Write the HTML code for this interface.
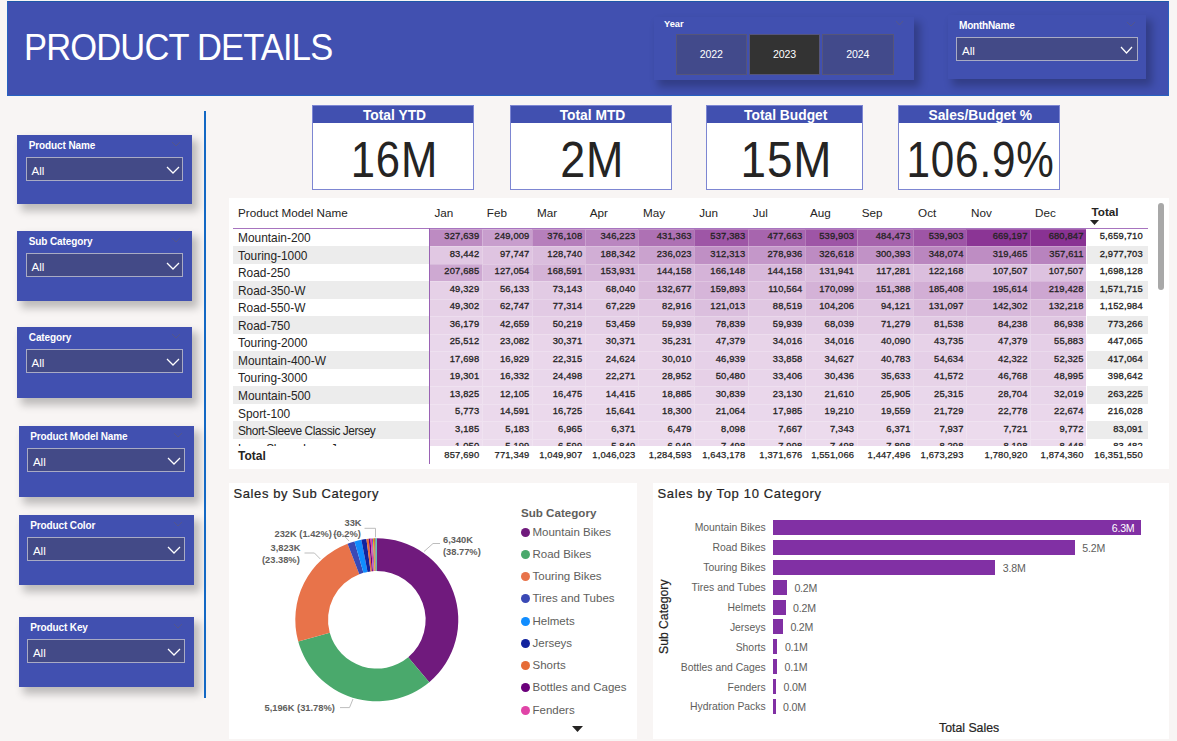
<!DOCTYPE html>
<html><head><meta charset="utf-8"><title>Product Details</title>
<style>
*{margin:0;padding:0;box-sizing:border-box}
html,body{width:1177px;height:741px;overflow:hidden;background:#f8f5f4;font-family:"Liberation Sans", sans-serif;}
.a{position:absolute}
.t{position:absolute;white-space:nowrap;line-height:1}
.slicer{position:absolute;background:#4150b0;box-shadow:5px 6px 8px 1px rgba(0,0,0,0.24);}
.sl-title{position:absolute;left:11px;top:5px;color:#fff;font-weight:bold;font-size:10px;white-space:nowrap;line-height:12px}
.dd{position:absolute;background:#434a87;border:1.7px solid #a9abc4;}
.dd .v{position:absolute;left:4.5px;top:6px;color:#fff;font-size:11.6px;line-height:14px}
.chev{position:absolute}
.card{position:absolute;background:#fff;border:1px solid #7d86d2;}
.card .h{position:absolute;left:0;top:0;right:0;height:17px;background:#4150b0;color:#fff;font-weight:bold;font-size:13.8px;text-align:center;line-height:17px;padding-left:3px;padding-top:0.6px;height:16.6px;white-space:nowrap}
.card .n{position:absolute;left:0;right:0;top:33.5px;text-align:center;color:#252423;font-size:49.3px;line-height:40px;white-space:nowrap}
.card .n span{display:inline-block;transform:scaleX(0.84);transform-origin:center;letter-spacing:1px;margin-left:1px}
</style></head><body>

<div class="a" style="left:7px;top:1px;width:1162px;height:95px;background:#4150b0;border:1.3px solid #2862c0;border-top:1.5px solid #1f58a8"></div>
<div class="t" style="left:23.5px;top:29px;color:#fff;font-size:37.5px;letter-spacing:-0.9px;line-height:37px;transform:scaleX(0.92);transform-origin:0 0">PRODUCT DETAILS</div>
<div class="slicer" style="left:654px;top:16.5px;width:260px;height:63.5px"></div>
<div class="t" style="left:664px;top:20px;color:#fff;font-weight:bold;font-size:9.3px;line-height:9px">Year</div>
<svg class="chev" style="left:895px;top:20px" width="9" height="6" viewBox="0 0 9 6"><polyline points="1,1 4.5,5 8,1" fill="none" stroke="rgba(90,90,130,0.8)" stroke-width="1"/></svg>
<div class="a" style="left:676px;top:33.5px;width:70.5px;height:41px;background:#424a8b;border:1px solid #55557a"></div>
<div class="t" style="left:676px;width:70.5px;top:48.3px;text-align:center;color:#fff;font-size:10.6px;letter-spacing:-0.1px;line-height:12px">2022</div>
<div class="a" style="left:749px;top:33.5px;width:71px;height:41px;background:#333333;border:1px solid #55557a"></div>
<div class="t" style="left:749px;width:71px;top:48.3px;text-align:center;color:#fff;font-size:10.6px;letter-spacing:-0.1px;line-height:12px">2023</div>
<div class="a" style="left:822px;top:33.5px;width:71.5px;height:41px;background:#424a8b;border:1px solid #55557a"></div>
<div class="t" style="left:822px;width:71.5px;top:48.3px;text-align:center;color:#fff;font-size:10.6px;letter-spacing:-0.1px;line-height:12px">2024</div>
<div class="slicer" style="left:948px;top:15px;width:198px;height:64px"></div>
<div class="t" style="left:959px;top:20.8px;color:#fff;font-weight:bold;font-size:10.1px;line-height:10px;letter-spacing:-0.25px">MonthName</div>
<svg class="chev" style="left:1126px;top:20.5px" width="10" height="6" viewBox="0 0 10 6"><polyline points="1,1 5.0,5 9,1" fill="none" stroke="rgba(85,85,135,0.9)" stroke-width="1"/></svg>
<div class="dd" style="left:956px;top:37px;width:182px;height:24px"><div class="v" style="top:5.5px;left:5px">All</div></div>
<svg class="chev" style="left:1120.3px;top:46px" width="13" height="8" viewBox="0 0 13 8"><polyline points="1,1 6.5,7 12,1" fill="none" stroke="#fff" stroke-width="1.25"/></svg>
<div class="slicer" style="left:17.3px;top:134.8px;width:175.1px;height:69.7px"></div>
<div class="t" style="left:28.8px;top:140.0px;color:#fff;font-weight:bold;font-size:10px;line-height:11px;letter-spacing:-0.12px">Product Name</div>
<svg class="chev" style="left:171.3px;top:140.8px" width="10" height="6" viewBox="0 0 10 6"><polyline points="1,1 5.0,5 9,1" fill="none" stroke="rgba(85,85,135,0.9)" stroke-width="1"/></svg>
<div class="dd" style="left:26.0px;top:156.8px;width:157.3px;height:24px"><div class="v">All</div></div>
<svg class="chev" style="left:165.60000000000002px;top:165.8px" width="14" height="8" viewBox="0 0 14 8"><polyline points="1,1 7.0,7 13,1" fill="none" stroke="#fff" stroke-width="1.25"/></svg>
<div class="slicer" style="left:17.3px;top:231px;width:175.1px;height:69.7px"></div>
<div class="t" style="left:28.8px;top:236.2px;color:#fff;font-weight:bold;font-size:10px;line-height:11px;letter-spacing:-0.12px">Sub Category</div>
<svg class="chev" style="left:171.3px;top:237px" width="10" height="6" viewBox="0 0 10 6"><polyline points="1,1 5.0,5 9,1" fill="none" stroke="rgba(85,85,135,0.9)" stroke-width="1"/></svg>
<div class="dd" style="left:26.0px;top:253px;width:157.3px;height:24px"><div class="v">All</div></div>
<svg class="chev" style="left:165.60000000000002px;top:262px" width="14" height="8" viewBox="0 0 14 8"><polyline points="1,1 7.0,7 13,1" fill="none" stroke="#fff" stroke-width="1.25"/></svg>
<div class="slicer" style="left:17.3px;top:327.2px;width:175.1px;height:71.3px"></div>
<div class="t" style="left:28.8px;top:332.4px;color:#fff;font-weight:bold;font-size:10px;line-height:11px;letter-spacing:-0.12px">Category</div>
<svg class="chev" style="left:171.3px;top:333.2px" width="10" height="6" viewBox="0 0 10 6"><polyline points="1,1 5.0,5 9,1" fill="none" stroke="rgba(85,85,135,0.9)" stroke-width="1"/></svg>
<div class="dd" style="left:26.0px;top:349.2px;width:157.3px;height:24px"><div class="v">All</div></div>
<svg class="chev" style="left:165.60000000000002px;top:358.2px" width="14" height="8" viewBox="0 0 14 8"><polyline points="1,1 7.0,7 13,1" fill="none" stroke="#fff" stroke-width="1.25"/></svg>
<div class="slicer" style="left:18.7px;top:426.1px;width:175.10000000000002px;height:70.7px"></div>
<div class="t" style="left:30.2px;top:431.3px;color:#fff;font-weight:bold;font-size:10px;line-height:11px;letter-spacing:-0.12px">Product Model Name</div>
<svg class="chev" style="left:172.7px;top:432.1px" width="10" height="6" viewBox="0 0 10 6"><polyline points="1,1 5.0,5 9,1" fill="none" stroke="rgba(85,85,135,0.9)" stroke-width="1"/></svg>
<div class="dd" style="left:27.4px;top:448.1px;width:157.3px;height:24px"><div class="v">All</div></div>
<svg class="chev" style="left:167.0px;top:457.1px" width="14" height="8" viewBox="0 0 14 8"><polyline points="1,1 7.0,7 13,1" fill="none" stroke="#fff" stroke-width="1.25"/></svg>
<div class="slicer" style="left:18.7px;top:514.7px;width:175.10000000000002px;height:70.7px"></div>
<div class="t" style="left:30.2px;top:519.9000000000001px;color:#fff;font-weight:bold;font-size:10px;line-height:11px;letter-spacing:-0.12px">Product Color</div>
<svg class="chev" style="left:172.7px;top:520.7px" width="10" height="6" viewBox="0 0 10 6"><polyline points="1,1 5.0,5 9,1" fill="none" stroke="rgba(85,85,135,0.9)" stroke-width="1"/></svg>
<div class="dd" style="left:27.4px;top:536.7px;width:157.3px;height:24px"><div class="v">All</div></div>
<svg class="chev" style="left:167.0px;top:545.7px" width="14" height="8" viewBox="0 0 14 8"><polyline points="1,1 7.0,7 13,1" fill="none" stroke="#fff" stroke-width="1.25"/></svg>
<div class="slicer" style="left:18.7px;top:617.2px;width:175.10000000000002px;height:69.5px"></div>
<div class="t" style="left:30.2px;top:622.4000000000001px;color:#fff;font-weight:bold;font-size:10px;line-height:11px;letter-spacing:-0.12px">Product Key</div>
<svg class="chev" style="left:172.7px;top:623.2px" width="10" height="6" viewBox="0 0 10 6"><polyline points="1,1 5.0,5 9,1" fill="none" stroke="rgba(85,85,135,0.9)" stroke-width="1"/></svg>
<div class="dd" style="left:27.4px;top:639.2px;width:157.3px;height:24px"><div class="v">All</div></div>
<svg class="chev" style="left:167.0px;top:648.2px" width="14" height="8" viewBox="0 0 14 8"><polyline points="1,1 7.0,7 13,1" fill="none" stroke="#fff" stroke-width="1.25"/></svg>
<div class="a" style="left:203.5px;top:110.8px;width:2px;height:587.7px;background:#1368c4"></div>
<div class="card" style="left:312px;top:105px;width:162px;height:85px"><div class="h">Total YTD</div><div class="n" style="margin-left:2px"><span style="transform:scaleX(0.885)">16M</span></div></div>
<div class="card" style="left:510px;top:105px;width:162px;height:85px"><div class="h">Total MTD</div><div class="n" style="margin-left:1.5px"><span style="transform:scaleX(0.91)">2M</span></div></div>
<div class="card" style="left:706px;top:105px;width:156.5px;height:85px"><div class="h">Total Budget</div><div class="n" style="margin-left:4px"><span style="transform:scaleX(0.93)">15M</span></div></div>
<div class="card" style="left:897.5px;top:105px;width:162.5px;height:85px"><div class="h">Sales/Budget %</div><div class="n" style="margin-left:-5.5px"><span style="transform:scaleX(0.856)">106.9%</span></div></div>
<div class="a" style="left:229px;top:198px;width:940px;height:270.5px;background:#fff"></div>
<div class="t" style="left:238px;top:207px;color:#252423;font-size:11.7px;line-height:12px">Product Model Name</div>
<div class="t" style="left:434.5px;top:207px;color:#252423;font-size:11.7px;line-height:12px">Jan</div>
<div class="t" style="left:486.8px;top:207px;color:#252423;font-size:11.7px;line-height:12px">Feb</div>
<div class="t" style="left:537.0px;top:207px;color:#252423;font-size:11.7px;line-height:12px">Mar</div>
<div class="t" style="left:589.8px;top:207px;color:#252423;font-size:11.7px;line-height:12px">Apr</div>
<div class="t" style="left:642.9px;top:207px;color:#252423;font-size:11.7px;line-height:12px">May</div>
<div class="t" style="left:699.2px;top:207px;color:#252423;font-size:11.7px;line-height:12px">Jun</div>
<div class="t" style="left:752.8px;top:207px;color:#252423;font-size:11.7px;line-height:12px">Jul</div>
<div class="t" style="left:809.9px;top:207px;color:#252423;font-size:11.7px;line-height:12px">Aug</div>
<div class="t" style="left:861.7px;top:207px;color:#252423;font-size:11.7px;line-height:12px">Sep</div>
<div class="t" style="left:918.1px;top:207px;color:#252423;font-size:11.7px;line-height:12px">Oct</div>
<div class="t" style="left:971.1px;top:207px;color:#252423;font-size:11.7px;line-height:12px">Nov</div>
<div class="t" style="left:1035.1px;top:207px;color:#252423;font-size:11.7px;line-height:12px">Dec</div>
<div class="t" style="left:1091.5px;top:206.3px;color:#252423;font-size:11.7px;font-weight:bold;line-height:12px">Total</div>
<svg class="a" style="left:1090px;top:220px" width="9" height="6"><polygon points="0,0 9,0 4.5,5" fill="#252423"/></svg>
<div class="a" style="left:229px;top:228.5px;width:940px;height:217.5px;overflow:hidden">
<div class="t" style="left:9px;top:3.8px;color:#252423;font-size:11.9px;line-height:12px;letter-spacing:normal">Mountain-200</div>
<div class="a" style="left:200.4px;top:0.0px;width:52.30000000000001px;height:17.52px;background:#bd8bc2;border-left:1px solid rgba(255,255,255,0.22);border-top:1px solid rgba(255,255,255,0.22)"></div>
<div class="t" style="left:201px;width:49.30000000000001px;top:2.5px;text-align:right;color:#252423;font-size:9.4px;letter-spacing:0.15px;-webkit-text-stroke:0.3px #252423;line-height:10px">327,639</div>
<div class="a" style="left:252.70000000000002px;top:0.0px;width:50.19999999999999px;height:17.52px;background:#c89ecd;border-left:1px solid rgba(255,255,255,0.22);border-top:1px solid rgba(255,255,255,0.22)"></div>
<div class="t" style="left:253.3px;width:47.19999999999999px;top:2.5px;text-align:right;color:#252423;font-size:9.4px;letter-spacing:0.15px;-webkit-text-stroke:0.3px #252423;line-height:10px">249,009</div>
<div class="a" style="left:302.9px;top:0.0px;width:52.799999999999955px;height:17.52px;background:#b67fbc;border-left:1px solid rgba(255,255,255,0.22);border-top:1px solid rgba(255,255,255,0.22)"></div>
<div class="t" style="left:303.5px;width:49.799999999999955px;top:2.5px;text-align:right;color:#252423;font-size:9.4px;letter-spacing:0.15px;-webkit-text-stroke:0.3px #252423;line-height:10px">376,108</div>
<div class="a" style="left:355.69999999999993px;top:0.0px;width:53.10000000000002px;height:17.52px;background:#ba86c0;border-left:1px solid rgba(255,255,255,0.22);border-top:1px solid rgba(255,255,255,0.22)"></div>
<div class="t" style="left:356.29999999999995px;width:50.10000000000002px;top:2.5px;text-align:right;color:#252423;font-size:9.4px;letter-spacing:0.15px;-webkit-text-stroke:0.3px #252423;line-height:10px">346,223</div>
<div class="a" style="left:408.79999999999995px;top:0.0px;width:56.30000000000007px;height:17.52px;background:#ae71b4;border-left:1px solid rgba(255,255,255,0.22);border-top:1px solid rgba(255,255,255,0.22)"></div>
<div class="t" style="left:409.4px;width:53.30000000000007px;top:2.5px;text-align:right;color:#252423;font-size:9.4px;letter-spacing:0.15px;-webkit-text-stroke:0.3px #252423;line-height:10px">431,363</div>
<div class="a" style="left:465.1px;top:0.0px;width:53.59999999999991px;height:17.52px;background:#9e56a6;border-left:1px solid rgba(255,255,255,0.22);border-top:1px solid rgba(255,255,255,0.22)"></div>
<div class="t" style="left:465.70000000000005px;width:50.59999999999991px;top:2.5px;text-align:right;color:#252423;font-size:9.4px;letter-spacing:0.15px;-webkit-text-stroke:0.3px #252423;line-height:10px">537,383</div>
<div class="a" style="left:518.6999999999999px;top:0.0px;width:57.10000000000002px;height:17.52px;background:#a765ae;border-left:1px solid rgba(255,255,255,0.22);border-top:1px solid rgba(255,255,255,0.22)"></div>
<div class="t" style="left:519.3px;width:54.10000000000002px;top:2.5px;text-align:right;color:#252423;font-size:9.4px;letter-spacing:0.15px;-webkit-text-stroke:0.3px #252423;line-height:10px">477,663</div>
<div class="a" style="left:575.8px;top:0.0px;width:51.80000000000007px;height:17.52px;background:#9e55a6;border-left:1px solid rgba(255,255,255,0.22);border-top:1px solid rgba(255,255,255,0.22)"></div>
<div class="t" style="left:576.4px;width:48.80000000000007px;top:2.5px;text-align:right;color:#252423;font-size:9.4px;letter-spacing:0.15px;-webkit-text-stroke:0.3px #252423;line-height:10px">539,903</div>
<div class="a" style="left:627.6px;top:0.0px;width:56.39999999999998px;height:17.52px;background:#a663ad;border-left:1px solid rgba(255,255,255,0.22);border-top:1px solid rgba(255,255,255,0.22)"></div>
<div class="t" style="left:628.2px;width:53.39999999999998px;top:2.5px;text-align:right;color:#252423;font-size:9.4px;letter-spacing:0.15px;-webkit-text-stroke:0.3px #252423;line-height:10px">484,473</div>
<div class="a" style="left:684.0px;top:0.0px;width:53.0px;height:17.52px;background:#9e55a6;border-left:1px solid rgba(255,255,255,0.22);border-top:1px solid rgba(255,255,255,0.22)"></div>
<div class="t" style="left:684.6px;width:50.0px;top:2.5px;text-align:right;color:#252423;font-size:9.4px;letter-spacing:0.15px;-webkit-text-stroke:0.3px #252423;line-height:10px">539,903</div>
<div class="a" style="left:737.0px;top:0.0px;width:63.999999999999886px;height:17.52px;background:#8b3595;border-left:1px solid rgba(255,255,255,0.22);border-top:1px solid rgba(255,255,255,0.22)"></div>
<div class="t" style="left:737.6px;width:60.999999999999886px;top:2.5px;text-align:right;color:#252423;font-size:9.4px;letter-spacing:0.15px;-webkit-text-stroke:0.3px #252423;line-height:10px">669,197</div>
<div class="a" style="left:800.9999999999999px;top:0.0px;width:56.0px;height:17.52px;background:#893293;border-left:1px solid rgba(255,255,255,0.22);border-top:1px solid rgba(255,255,255,0.22)"></div>
<div class="t" style="left:801.5999999999999px;width:53.0px;top:2.5px;text-align:right;color:#252423;font-size:9.4px;letter-spacing:0.15px;-webkit-text-stroke:0.3px #252423;line-height:10px">680,847</div>
<div class="t" style="left:857.5999999999999px;width:56.200000000000045px;top:2.5px;text-align:right;color:#252423;font-size:9.4px;letter-spacing:0.15px;-webkit-text-stroke:0.3px #252423;line-height:10px">5,659,710</div>
<div class="a" style="left:3.8000000000000114px;top:17.52px;width:196.2px;height:17.52px;background:#ececec"></div>
<div class="a" style="left:857.5999999999999px;top:17.52px;width:61.200000000000045px;height:17.52px;background:#ececec"></div>
<div class="t" style="left:9px;top:21.32px;color:#252423;font-size:11.9px;line-height:12px;letter-spacing:normal">Touring-1000</div>
<div class="a" style="left:200.4px;top:17.52px;width:52.30000000000001px;height:17.52px;background:#e1c8e3;border-left:1px solid rgba(255,255,255,0.22);border-top:1px solid rgba(255,255,255,0.22)"></div>
<div class="t" style="left:201px;width:49.30000000000001px;top:20.02px;text-align:right;color:#252423;font-size:9.4px;letter-spacing:0.15px;-webkit-text-stroke:0.3px #252423;line-height:10px">83,442</div>
<div class="a" style="left:252.70000000000002px;top:17.52px;width:50.19999999999999px;height:17.52px;background:#dfc4e1;border-left:1px solid rgba(255,255,255,0.22);border-top:1px solid rgba(255,255,255,0.22)"></div>
<div class="t" style="left:253.3px;width:47.19999999999999px;top:20.02px;text-align:right;color:#252423;font-size:9.4px;letter-spacing:0.15px;-webkit-text-stroke:0.3px #252423;line-height:10px">97,747</div>
<div class="a" style="left:302.9px;top:17.52px;width:52.799999999999955px;height:17.52px;background:#dabddd;border-left:1px solid rgba(255,255,255,0.22);border-top:1px solid rgba(255,255,255,0.22)"></div>
<div class="t" style="left:303.5px;width:49.799999999999955px;top:20.02px;text-align:right;color:#252423;font-size:9.4px;letter-spacing:0.15px;-webkit-text-stroke:0.3px #252423;line-height:10px">128,740</div>
<div class="a" style="left:355.69999999999993px;top:17.52px;width:53.10000000000002px;height:17.52px;background:#d1aed5;border-left:1px solid rgba(255,255,255,0.22);border-top:1px solid rgba(255,255,255,0.22)"></div>
<div class="t" style="left:356.29999999999995px;width:50.10000000000002px;top:20.02px;text-align:right;color:#252423;font-size:9.4px;letter-spacing:0.15px;-webkit-text-stroke:0.3px #252423;line-height:10px">188,342</div>
<div class="a" style="left:408.79999999999995px;top:17.52px;width:56.30000000000007px;height:17.52px;background:#caa2ce;border-left:1px solid rgba(255,255,255,0.22);border-top:1px solid rgba(255,255,255,0.22)"></div>
<div class="t" style="left:409.4px;width:53.30000000000007px;top:20.02px;text-align:right;color:#252423;font-size:9.4px;letter-spacing:0.15px;-webkit-text-stroke:0.3px #252423;line-height:10px">236,023</div>
<div class="a" style="left:465.1px;top:17.52px;width:53.59999999999991px;height:17.52px;background:#bf8fc4;border-left:1px solid rgba(255,255,255,0.22);border-top:1px solid rgba(255,255,255,0.22)"></div>
<div class="t" style="left:465.70000000000005px;width:50.59999999999991px;top:20.02px;text-align:right;color:#252423;font-size:9.4px;letter-spacing:0.15px;-webkit-text-stroke:0.3px #252423;line-height:10px">312,313</div>
<div class="a" style="left:518.6999999999999px;top:17.52px;width:57.10000000000002px;height:17.52px;background:#c497c9;border-left:1px solid rgba(255,255,255,0.22);border-top:1px solid rgba(255,255,255,0.22)"></div>
<div class="t" style="left:519.3px;width:54.10000000000002px;top:20.02px;text-align:right;color:#252423;font-size:9.4px;letter-spacing:0.15px;-webkit-text-stroke:0.3px #252423;line-height:10px">278,936</div>
<div class="a" style="left:575.8px;top:17.52px;width:51.80000000000007px;height:17.52px;background:#bd8bc2;border-left:1px solid rgba(255,255,255,0.22);border-top:1px solid rgba(255,255,255,0.22)"></div>
<div class="t" style="left:576.4px;width:48.80000000000007px;top:20.02px;text-align:right;color:#252423;font-size:9.4px;letter-spacing:0.15px;-webkit-text-stroke:0.3px #252423;line-height:10px">326,618</div>
<div class="a" style="left:627.6px;top:17.52px;width:56.39999999999998px;height:17.52px;background:#c192c6;border-left:1px solid rgba(255,255,255,0.22);border-top:1px solid rgba(255,255,255,0.22)"></div>
<div class="t" style="left:628.2px;width:53.39999999999998px;top:20.02px;text-align:right;color:#252423;font-size:9.4px;letter-spacing:0.15px;-webkit-text-stroke:0.3px #252423;line-height:10px">300,393</div>
<div class="a" style="left:684.0px;top:17.52px;width:53.0px;height:17.52px;background:#ba86bf;border-left:1px solid rgba(255,255,255,0.22);border-top:1px solid rgba(255,255,255,0.22)"></div>
<div class="t" style="left:684.6px;width:50.0px;top:20.02px;text-align:right;color:#252423;font-size:9.4px;letter-spacing:0.15px;-webkit-text-stroke:0.3px #252423;line-height:10px">348,074</div>
<div class="a" style="left:737.0px;top:17.52px;width:63.999999999999886px;height:17.52px;background:#be8dc3;border-left:1px solid rgba(255,255,255,0.22);border-top:1px solid rgba(255,255,255,0.22)"></div>
<div class="t" style="left:737.6px;width:60.999999999999886px;top:20.02px;text-align:right;color:#252423;font-size:9.4px;letter-spacing:0.15px;-webkit-text-stroke:0.3px #252423;line-height:10px">319,465</div>
<div class="a" style="left:800.9999999999999px;top:17.52px;width:56.0px;height:17.52px;background:#b883be;border-left:1px solid rgba(255,255,255,0.22);border-top:1px solid rgba(255,255,255,0.22)"></div>
<div class="t" style="left:801.5999999999999px;width:53.0px;top:20.02px;text-align:right;color:#252423;font-size:9.4px;letter-spacing:0.15px;-webkit-text-stroke:0.3px #252423;line-height:10px">357,611</div>
<div class="t" style="left:857.5999999999999px;width:56.200000000000045px;top:20.02px;text-align:right;color:#252423;font-size:9.4px;letter-spacing:0.15px;-webkit-text-stroke:0.3px #252423;line-height:10px">2,977,703</div>
<div class="t" style="left:9px;top:38.839999999999996px;color:#252423;font-size:11.9px;line-height:12px;letter-spacing:normal">Road-250</div>
<div class="a" style="left:200.4px;top:35.04px;width:52.30000000000001px;height:17.52px;background:#cea9d2;border-left:1px solid rgba(255,255,255,0.22);border-top:1px solid rgba(255,255,255,0.22)"></div>
<div class="t" style="left:201px;width:49.30000000000001px;top:37.54px;text-align:right;color:#252423;font-size:9.4px;letter-spacing:0.15px;-webkit-text-stroke:0.3px #252423;line-height:10px">207,685</div>
<div class="a" style="left:252.70000000000002px;top:35.04px;width:50.19999999999999px;height:17.52px;background:#dabddd;border-left:1px solid rgba(255,255,255,0.22);border-top:1px solid rgba(255,255,255,0.22)"></div>
<div class="t" style="left:253.3px;width:47.19999999999999px;top:37.54px;text-align:right;color:#252423;font-size:9.4px;letter-spacing:0.15px;-webkit-text-stroke:0.3px #252423;line-height:10px">127,054</div>
<div class="a" style="left:302.9px;top:35.04px;width:52.799999999999955px;height:17.52px;background:#d4b3d7;border-left:1px solid rgba(255,255,255,0.22);border-top:1px solid rgba(255,255,255,0.22)"></div>
<div class="t" style="left:303.5px;width:49.799999999999955px;top:37.54px;text-align:right;color:#252423;font-size:9.4px;letter-spacing:0.15px;-webkit-text-stroke:0.3px #252423;line-height:10px">168,591</div>
<div class="a" style="left:355.69999999999993px;top:35.04px;width:53.10000000000002px;height:17.52px;background:#d6b6d9;border-left:1px solid rgba(255,255,255,0.22);border-top:1px solid rgba(255,255,255,0.22)"></div>
<div class="t" style="left:356.29999999999995px;width:50.10000000000002px;top:37.54px;text-align:right;color:#252423;font-size:9.4px;letter-spacing:0.15px;-webkit-text-stroke:0.3px #252423;line-height:10px">153,931</div>
<div class="a" style="left:408.79999999999995px;top:35.04px;width:56.30000000000007px;height:17.52px;background:#d8b9db;border-left:1px solid rgba(255,255,255,0.22);border-top:1px solid rgba(255,255,255,0.22)"></div>
<div class="t" style="left:409.4px;width:53.30000000000007px;top:37.54px;text-align:right;color:#252423;font-size:9.4px;letter-spacing:0.15px;-webkit-text-stroke:0.3px #252423;line-height:10px">144,158</div>
<div class="a" style="left:465.1px;top:35.04px;width:53.59999999999991px;height:17.52px;background:#d5b3d8;border-left:1px solid rgba(255,255,255,0.22);border-top:1px solid rgba(255,255,255,0.22)"></div>
<div class="t" style="left:465.70000000000005px;width:50.59999999999991px;top:37.54px;text-align:right;color:#252423;font-size:9.4px;letter-spacing:0.15px;-webkit-text-stroke:0.3px #252423;line-height:10px">166,148</div>
<div class="a" style="left:518.6999999999999px;top:35.04px;width:57.10000000000002px;height:17.52px;background:#d8b9db;border-left:1px solid rgba(255,255,255,0.22);border-top:1px solid rgba(255,255,255,0.22)"></div>
<div class="t" style="left:519.3px;width:54.10000000000002px;top:37.54px;text-align:right;color:#252423;font-size:9.4px;letter-spacing:0.15px;-webkit-text-stroke:0.3px #252423;line-height:10px">144,158</div>
<div class="a" style="left:575.8px;top:35.04px;width:51.80000000000007px;height:17.52px;background:#dabcdc;border-left:1px solid rgba(255,255,255,0.22);border-top:1px solid rgba(255,255,255,0.22)"></div>
<div class="t" style="left:576.4px;width:48.80000000000007px;top:37.54px;text-align:right;color:#252423;font-size:9.4px;letter-spacing:0.15px;-webkit-text-stroke:0.3px #252423;line-height:10px">131,941</div>
<div class="a" style="left:627.6px;top:35.04px;width:56.39999999999998px;height:17.52px;background:#dcc0de;border-left:1px solid rgba(255,255,255,0.22);border-top:1px solid rgba(255,255,255,0.22)"></div>
<div class="t" style="left:628.2px;width:53.39999999999998px;top:37.54px;text-align:right;color:#252423;font-size:9.4px;letter-spacing:0.15px;-webkit-text-stroke:0.3px #252423;line-height:10px">117,281</div>
<div class="a" style="left:684.0px;top:35.04px;width:53.0px;height:17.52px;background:#dbbede;border-left:1px solid rgba(255,255,255,0.22);border-top:1px solid rgba(255,255,255,0.22)"></div>
<div class="t" style="left:684.6px;width:50.0px;top:37.54px;text-align:right;color:#252423;font-size:9.4px;letter-spacing:0.15px;-webkit-text-stroke:0.3px #252423;line-height:10px">122,168</div>
<div class="a" style="left:737.0px;top:35.04px;width:63.999999999999886px;height:17.52px;background:#ddc2e0;border-left:1px solid rgba(255,255,255,0.22);border-top:1px solid rgba(255,255,255,0.22)"></div>
<div class="t" style="left:737.6px;width:60.999999999999886px;top:37.54px;text-align:right;color:#252423;font-size:9.4px;letter-spacing:0.15px;-webkit-text-stroke:0.3px #252423;line-height:10px">107,507</div>
<div class="a" style="left:800.9999999999999px;top:35.04px;width:56.0px;height:17.52px;background:#ddc2e0;border-left:1px solid rgba(255,255,255,0.22);border-top:1px solid rgba(255,255,255,0.22)"></div>
<div class="t" style="left:801.5999999999999px;width:53.0px;top:37.54px;text-align:right;color:#252423;font-size:9.4px;letter-spacing:0.15px;-webkit-text-stroke:0.3px #252423;line-height:10px">107,507</div>
<div class="t" style="left:857.5999999999999px;width:56.200000000000045px;top:37.54px;text-align:right;color:#252423;font-size:9.4px;letter-spacing:0.15px;-webkit-text-stroke:0.3px #252423;line-height:10px">1,698,128</div>
<div class="a" style="left:3.8000000000000114px;top:52.56px;width:196.2px;height:17.52px;background:#ececec"></div>
<div class="a" style="left:857.5999999999999px;top:52.56px;width:61.200000000000045px;height:17.52px;background:#ececec"></div>
<div class="t" style="left:9px;top:56.36px;color:#252423;font-size:11.9px;line-height:12px;letter-spacing:normal">Road-350-W</div>
<div class="a" style="left:200.4px;top:52.56px;width:52.30000000000001px;height:17.52px;background:#e6d1e7;border-left:1px solid rgba(255,255,255,0.22);border-top:1px solid rgba(255,255,255,0.22)"></div>
<div class="t" style="left:201px;width:49.30000000000001px;top:55.06px;text-align:right;color:#252423;font-size:9.4px;letter-spacing:0.15px;-webkit-text-stroke:0.3px #252423;line-height:10px">49,329</div>
<div class="a" style="left:252.70000000000002px;top:52.56px;width:50.19999999999999px;height:17.52px;background:#e5cfe6;border-left:1px solid rgba(255,255,255,0.22);border-top:1px solid rgba(255,255,255,0.22)"></div>
<div class="t" style="left:253.3px;width:47.19999999999999px;top:55.06px;text-align:right;color:#252423;font-size:9.4px;letter-spacing:0.15px;-webkit-text-stroke:0.3px #252423;line-height:10px">56,133</div>
<div class="a" style="left:302.9px;top:52.56px;width:52.799999999999955px;height:17.52px;background:#e2cbe4;border-left:1px solid rgba(255,255,255,0.22);border-top:1px solid rgba(255,255,255,0.22)"></div>
<div class="t" style="left:303.5px;width:49.799999999999955px;top:55.06px;text-align:right;color:#252423;font-size:9.4px;letter-spacing:0.15px;-webkit-text-stroke:0.3px #252423;line-height:10px">73,143</div>
<div class="a" style="left:355.69999999999993px;top:52.56px;width:53.10000000000002px;height:17.52px;background:#e3cce5;border-left:1px solid rgba(255,255,255,0.22);border-top:1px solid rgba(255,255,255,0.22)"></div>
<div class="t" style="left:356.29999999999995px;width:50.10000000000002px;top:55.06px;text-align:right;color:#252423;font-size:9.4px;letter-spacing:0.15px;-webkit-text-stroke:0.3px #252423;line-height:10px">68,040</div>
<div class="a" style="left:408.79999999999995px;top:52.56px;width:56.30000000000007px;height:17.52px;background:#dabcdc;border-left:1px solid rgba(255,255,255,0.22);border-top:1px solid rgba(255,255,255,0.22)"></div>
<div class="t" style="left:409.4px;width:53.30000000000007px;top:55.06px;text-align:right;color:#252423;font-size:9.4px;letter-spacing:0.15px;-webkit-text-stroke:0.3px #252423;line-height:10px">132,677</div>
<div class="a" style="left:465.1px;top:52.56px;width:53.59999999999991px;height:17.52px;background:#d6b5d9;border-left:1px solid rgba(255,255,255,0.22);border-top:1px solid rgba(255,255,255,0.22)"></div>
<div class="t" style="left:465.70000000000005px;width:50.59999999999991px;top:55.06px;text-align:right;color:#252423;font-size:9.4px;letter-spacing:0.15px;-webkit-text-stroke:0.3px #252423;line-height:10px">159,893</div>
<div class="a" style="left:518.6999999999999px;top:52.56px;width:57.10000000000002px;height:17.52px;background:#ddc1df;border-left:1px solid rgba(255,255,255,0.22);border-top:1px solid rgba(255,255,255,0.22)"></div>
<div class="t" style="left:519.3px;width:54.10000000000002px;top:55.06px;text-align:right;color:#252423;font-size:9.4px;letter-spacing:0.15px;-webkit-text-stroke:0.3px #252423;line-height:10px">110,564</div>
<div class="a" style="left:575.8px;top:52.56px;width:51.80000000000007px;height:17.52px;background:#d4b2d7;border-left:1px solid rgba(255,255,255,0.22);border-top:1px solid rgba(255,255,255,0.22)"></div>
<div class="t" style="left:576.4px;width:48.80000000000007px;top:55.06px;text-align:right;color:#252423;font-size:9.4px;letter-spacing:0.15px;-webkit-text-stroke:0.3px #252423;line-height:10px">170,099</div>
<div class="a" style="left:627.6px;top:52.56px;width:56.39999999999998px;height:17.52px;background:#d7b7da;border-left:1px solid rgba(255,255,255,0.22);border-top:1px solid rgba(255,255,255,0.22)"></div>
<div class="t" style="left:628.2px;width:53.39999999999998px;top:55.06px;text-align:right;color:#252423;font-size:9.4px;letter-spacing:0.15px;-webkit-text-stroke:0.3px #252423;line-height:10px">151,388</div>
<div class="a" style="left:684.0px;top:52.56px;width:53.0px;height:17.52px;background:#d2aed5;border-left:1px solid rgba(255,255,255,0.22);border-top:1px solid rgba(255,255,255,0.22)"></div>
<div class="t" style="left:684.6px;width:50.0px;top:55.06px;text-align:right;color:#252423;font-size:9.4px;letter-spacing:0.15px;-webkit-text-stroke:0.3px #252423;line-height:10px">185,408</div>
<div class="a" style="left:737.0px;top:52.56px;width:63.999999999999886px;height:17.52px;background:#d0acd4;border-left:1px solid rgba(255,255,255,0.22);border-top:1px solid rgba(255,255,255,0.22)"></div>
<div class="t" style="left:737.6px;width:60.999999999999886px;top:55.06px;text-align:right;color:#252423;font-size:9.4px;letter-spacing:0.15px;-webkit-text-stroke:0.3px #252423;line-height:10px">195,614</div>
<div class="a" style="left:800.9999999999999px;top:52.56px;width:56.0px;height:17.52px;background:#cda6d1;border-left:1px solid rgba(255,255,255,0.22);border-top:1px solid rgba(255,255,255,0.22)"></div>
<div class="t" style="left:801.5999999999999px;width:53.0px;top:55.06px;text-align:right;color:#252423;font-size:9.4px;letter-spacing:0.15px;-webkit-text-stroke:0.3px #252423;line-height:10px">219,428</div>
<div class="t" style="left:857.5999999999999px;width:56.200000000000045px;top:55.06px;text-align:right;color:#252423;font-size:9.4px;letter-spacing:0.15px;-webkit-text-stroke:0.3px #252423;line-height:10px">1,571,715</div>
<div class="t" style="left:9px;top:73.88px;color:#252423;font-size:11.9px;line-height:12px;letter-spacing:normal">Road-550-W</div>
<div class="a" style="left:200.4px;top:70.08px;width:52.30000000000001px;height:17.52px;background:#e6d1e7;border-left:1px solid rgba(255,255,255,0.22);border-top:1px solid rgba(255,255,255,0.22)"></div>
<div class="t" style="left:201px;width:49.30000000000001px;top:72.58px;text-align:right;color:#252423;font-size:9.4px;letter-spacing:0.15px;-webkit-text-stroke:0.3px #252423;line-height:10px">49,302</div>
<div class="a" style="left:252.70000000000002px;top:70.08px;width:50.19999999999999px;height:17.52px;background:#e4cde6;border-left:1px solid rgba(255,255,255,0.22);border-top:1px solid rgba(255,255,255,0.22)"></div>
<div class="t" style="left:253.3px;width:47.19999999999999px;top:72.58px;text-align:right;color:#252423;font-size:9.4px;letter-spacing:0.15px;-webkit-text-stroke:0.3px #252423;line-height:10px">62,747</div>
<div class="a" style="left:302.9px;top:70.08px;width:52.799999999999955px;height:17.52px;background:#e2cae4;border-left:1px solid rgba(255,255,255,0.22);border-top:1px solid rgba(255,255,255,0.22)"></div>
<div class="t" style="left:303.5px;width:49.799999999999955px;top:72.58px;text-align:right;color:#252423;font-size:9.4px;letter-spacing:0.15px;-webkit-text-stroke:0.3px #252423;line-height:10px">77,314</div>
<div class="a" style="left:355.69999999999993px;top:70.08px;width:53.10000000000002px;height:17.52px;background:#e3cce5;border-left:1px solid rgba(255,255,255,0.22);border-top:1px solid rgba(255,255,255,0.22)"></div>
<div class="t" style="left:356.29999999999995px;width:50.10000000000002px;top:72.58px;text-align:right;color:#252423;font-size:9.4px;letter-spacing:0.15px;-webkit-text-stroke:0.3px #252423;line-height:10px">67,229</div>
<div class="a" style="left:408.79999999999995px;top:70.08px;width:56.30000000000007px;height:17.52px;background:#e1c8e3;border-left:1px solid rgba(255,255,255,0.22);border-top:1px solid rgba(255,255,255,0.22)"></div>
<div class="t" style="left:409.4px;width:53.30000000000007px;top:72.58px;text-align:right;color:#252423;font-size:9.4px;letter-spacing:0.15px;-webkit-text-stroke:0.3px #252423;line-height:10px">82,916</div>
<div class="a" style="left:465.1px;top:70.08px;width:53.59999999999991px;height:17.52px;background:#dbbfde;border-left:1px solid rgba(255,255,255,0.22);border-top:1px solid rgba(255,255,255,0.22)"></div>
<div class="t" style="left:465.70000000000005px;width:50.59999999999991px;top:72.58px;text-align:right;color:#252423;font-size:9.4px;letter-spacing:0.15px;-webkit-text-stroke:0.3px #252423;line-height:10px">121,013</div>
<div class="a" style="left:518.6999999999999px;top:70.08px;width:57.10000000000002px;height:17.52px;background:#e0c7e2;border-left:1px solid rgba(255,255,255,0.22);border-top:1px solid rgba(255,255,255,0.22)"></div>
<div class="t" style="left:519.3px;width:54.10000000000002px;top:72.58px;text-align:right;color:#252423;font-size:9.4px;letter-spacing:0.15px;-webkit-text-stroke:0.3px #252423;line-height:10px">88,519</div>
<div class="a" style="left:575.8px;top:70.08px;width:51.80000000000007px;height:17.52px;background:#dec3e0;border-left:1px solid rgba(255,255,255,0.22);border-top:1px solid rgba(255,255,255,0.22)"></div>
<div class="t" style="left:576.4px;width:48.80000000000007px;top:72.58px;text-align:right;color:#252423;font-size:9.4px;letter-spacing:0.15px;-webkit-text-stroke:0.3px #252423;line-height:10px">104,206</div>
<div class="a" style="left:627.6px;top:70.08px;width:56.39999999999998px;height:17.52px;background:#dfc5e1;border-left:1px solid rgba(255,255,255,0.22);border-top:1px solid rgba(255,255,255,0.22)"></div>
<div class="t" style="left:628.2px;width:53.39999999999998px;top:72.58px;text-align:right;color:#252423;font-size:9.4px;letter-spacing:0.15px;-webkit-text-stroke:0.3px #252423;line-height:10px">94,121</div>
<div class="a" style="left:684.0px;top:70.08px;width:53.0px;height:17.52px;background:#dabcdc;border-left:1px solid rgba(255,255,255,0.22);border-top:1px solid rgba(255,255,255,0.22)"></div>
<div class="t" style="left:684.6px;width:50.0px;top:72.58px;text-align:right;color:#252423;font-size:9.4px;letter-spacing:0.15px;-webkit-text-stroke:0.3px #252423;line-height:10px">131,097</div>
<div class="a" style="left:737.0px;top:70.08px;width:63.999999999999886px;height:17.52px;background:#d8b9db;border-left:1px solid rgba(255,255,255,0.22);border-top:1px solid rgba(255,255,255,0.22)"></div>
<div class="t" style="left:737.6px;width:60.999999999999886px;top:72.58px;text-align:right;color:#252423;font-size:9.4px;letter-spacing:0.15px;-webkit-text-stroke:0.3px #252423;line-height:10px">142,302</div>
<div class="a" style="left:800.9999999999999px;top:70.08px;width:56.0px;height:17.52px;background:#dabcdc;border-left:1px solid rgba(255,255,255,0.22);border-top:1px solid rgba(255,255,255,0.22)"></div>
<div class="t" style="left:801.5999999999999px;width:53.0px;top:72.58px;text-align:right;color:#252423;font-size:9.4px;letter-spacing:0.15px;-webkit-text-stroke:0.3px #252423;line-height:10px">132,218</div>
<div class="t" style="left:857.5999999999999px;width:56.200000000000045px;top:72.58px;text-align:right;color:#252423;font-size:9.4px;letter-spacing:0.15px;-webkit-text-stroke:0.3px #252423;line-height:10px">1,152,984</div>
<div class="a" style="left:3.8000000000000114px;top:87.6px;width:196.2px;height:17.52px;background:#ececec"></div>
<div class="a" style="left:857.5999999999999px;top:87.6px;width:61.200000000000045px;height:17.52px;background:#ececec"></div>
<div class="t" style="left:9px;top:91.39999999999999px;color:#252423;font-size:11.9px;line-height:12px;letter-spacing:normal">Road-750</div>
<div class="a" style="left:200.4px;top:87.6px;width:52.30000000000001px;height:17.52px;background:#e8d4e9;border-left:1px solid rgba(255,255,255,0.22);border-top:1px solid rgba(255,255,255,0.22)"></div>
<div class="t" style="left:201px;width:49.30000000000001px;top:90.1px;text-align:right;color:#252423;font-size:9.4px;letter-spacing:0.15px;-webkit-text-stroke:0.3px #252423;line-height:10px">36,179</div>
<div class="a" style="left:252.70000000000002px;top:87.6px;width:50.19999999999999px;height:17.52px;background:#e7d2e8;border-left:1px solid rgba(255,255,255,0.22);border-top:1px solid rgba(255,255,255,0.22)"></div>
<div class="t" style="left:253.3px;width:47.19999999999999px;top:90.1px;text-align:right;color:#252423;font-size:9.4px;letter-spacing:0.15px;-webkit-text-stroke:0.3px #252423;line-height:10px">42,659</div>
<div class="a" style="left:302.9px;top:87.6px;width:52.799999999999955px;height:17.52px;background:#e6d0e7;border-left:1px solid rgba(255,255,255,0.22);border-top:1px solid rgba(255,255,255,0.22)"></div>
<div class="t" style="left:303.5px;width:49.799999999999955px;top:90.1px;text-align:right;color:#252423;font-size:9.4px;letter-spacing:0.15px;-webkit-text-stroke:0.3px #252423;line-height:10px">50,219</div>
<div class="a" style="left:355.69999999999993px;top:87.6px;width:53.10000000000002px;height:17.52px;background:#e5d0e7;border-left:1px solid rgba(255,255,255,0.22);border-top:1px solid rgba(255,255,255,0.22)"></div>
<div class="t" style="left:356.29999999999995px;width:50.10000000000002px;top:90.1px;text-align:right;color:#252423;font-size:9.4px;letter-spacing:0.15px;-webkit-text-stroke:0.3px #252423;line-height:10px">53,459</div>
<div class="a" style="left:408.79999999999995px;top:87.6px;width:56.30000000000007px;height:17.52px;background:#e4cee6;border-left:1px solid rgba(255,255,255,0.22);border-top:1px solid rgba(255,255,255,0.22)"></div>
<div class="t" style="left:409.4px;width:53.30000000000007px;top:90.1px;text-align:right;color:#252423;font-size:9.4px;letter-spacing:0.15px;-webkit-text-stroke:0.3px #252423;line-height:10px">59,939</div>
<div class="a" style="left:465.1px;top:87.6px;width:53.59999999999991px;height:17.52px;background:#e1c9e3;border-left:1px solid rgba(255,255,255,0.22);border-top:1px solid rgba(255,255,255,0.22)"></div>
<div class="t" style="left:465.70000000000005px;width:50.59999999999991px;top:90.1px;text-align:right;color:#252423;font-size:9.4px;letter-spacing:0.15px;-webkit-text-stroke:0.3px #252423;line-height:10px">78,839</div>
<div class="a" style="left:518.6999999999999px;top:87.6px;width:57.10000000000002px;height:17.52px;background:#e4cee6;border-left:1px solid rgba(255,255,255,0.22);border-top:1px solid rgba(255,255,255,0.22)"></div>
<div class="t" style="left:519.3px;width:54.10000000000002px;top:90.1px;text-align:right;color:#252423;font-size:9.4px;letter-spacing:0.15px;-webkit-text-stroke:0.3px #252423;line-height:10px">59,939</div>
<div class="a" style="left:575.8px;top:87.6px;width:51.80000000000007px;height:17.52px;background:#e3cce5;border-left:1px solid rgba(255,255,255,0.22);border-top:1px solid rgba(255,255,255,0.22)"></div>
<div class="t" style="left:576.4px;width:48.80000000000007px;top:90.1px;text-align:right;color:#252423;font-size:9.4px;letter-spacing:0.15px;-webkit-text-stroke:0.3px #252423;line-height:10px">68,039</div>
<div class="a" style="left:627.6px;top:87.6px;width:56.39999999999998px;height:17.52px;background:#e3cbe4;border-left:1px solid rgba(255,255,255,0.22);border-top:1px solid rgba(255,255,255,0.22)"></div>
<div class="t" style="left:628.2px;width:53.39999999999998px;top:90.1px;text-align:right;color:#252423;font-size:9.4px;letter-spacing:0.15px;-webkit-text-stroke:0.3px #252423;line-height:10px">71,279</div>
<div class="a" style="left:684.0px;top:87.6px;width:53.0px;height:17.52px;background:#e1c9e3;border-left:1px solid rgba(255,255,255,0.22);border-top:1px solid rgba(255,255,255,0.22)"></div>
<div class="t" style="left:684.6px;width:50.0px;top:90.1px;text-align:right;color:#252423;font-size:9.4px;letter-spacing:0.15px;-webkit-text-stroke:0.3px #252423;line-height:10px">81,538</div>
<div class="a" style="left:737.0px;top:87.6px;width:63.999999999999886px;height:17.52px;background:#e1c8e3;border-left:1px solid rgba(255,255,255,0.22);border-top:1px solid rgba(255,255,255,0.22)"></div>
<div class="t" style="left:737.6px;width:60.999999999999886px;top:90.1px;text-align:right;color:#252423;font-size:9.4px;letter-spacing:0.15px;-webkit-text-stroke:0.3px #252423;line-height:10px">84,238</div>
<div class="a" style="left:800.9999999999999px;top:87.6px;width:56.0px;height:17.52px;background:#e0c7e2;border-left:1px solid rgba(255,255,255,0.22);border-top:1px solid rgba(255,255,255,0.22)"></div>
<div class="t" style="left:801.5999999999999px;width:53.0px;top:90.1px;text-align:right;color:#252423;font-size:9.4px;letter-spacing:0.15px;-webkit-text-stroke:0.3px #252423;line-height:10px">86,938</div>
<div class="t" style="left:857.5999999999999px;width:56.200000000000045px;top:90.1px;text-align:right;color:#252423;font-size:9.4px;letter-spacing:0.15px;-webkit-text-stroke:0.3px #252423;line-height:10px">773,266</div>
<div class="t" style="left:9px;top:108.92px;color:#252423;font-size:11.9px;line-height:12px;letter-spacing:normal">Touring-2000</div>
<div class="a" style="left:200.4px;top:105.12px;width:52.30000000000001px;height:17.52px;background:#e9d7eb;border-left:1px solid rgba(255,255,255,0.22);border-top:1px solid rgba(255,255,255,0.22)"></div>
<div class="t" style="left:201px;width:49.30000000000001px;top:107.62px;text-align:right;color:#252423;font-size:9.4px;letter-spacing:0.15px;-webkit-text-stroke:0.3px #252423;line-height:10px">25,512</div>
<div class="a" style="left:252.70000000000002px;top:105.12px;width:50.19999999999999px;height:17.52px;background:#ead7eb;border-left:1px solid rgba(255,255,255,0.22);border-top:1px solid rgba(255,255,255,0.22)"></div>
<div class="t" style="left:253.3px;width:47.19999999999999px;top:107.62px;text-align:right;color:#252423;font-size:9.4px;letter-spacing:0.15px;-webkit-text-stroke:0.3px #252423;line-height:10px">23,082</div>
<div class="a" style="left:302.9px;top:105.12px;width:52.799999999999955px;height:17.52px;background:#e9d5ea;border-left:1px solid rgba(255,255,255,0.22);border-top:1px solid rgba(255,255,255,0.22)"></div>
<div class="t" style="left:303.5px;width:49.799999999999955px;top:107.62px;text-align:right;color:#252423;font-size:9.4px;letter-spacing:0.15px;-webkit-text-stroke:0.3px #252423;line-height:10px">30,371</div>
<div class="a" style="left:355.69999999999993px;top:105.12px;width:53.10000000000002px;height:17.52px;background:#e9d5ea;border-left:1px solid rgba(255,255,255,0.22);border-top:1px solid rgba(255,255,255,0.22)"></div>
<div class="t" style="left:356.29999999999995px;width:50.10000000000002px;top:107.62px;text-align:right;color:#252423;font-size:9.4px;letter-spacing:0.15px;-webkit-text-stroke:0.3px #252423;line-height:10px">30,371</div>
<div class="a" style="left:408.79999999999995px;top:105.12px;width:56.30000000000007px;height:17.52px;background:#e8d4e9;border-left:1px solid rgba(255,255,255,0.22);border-top:1px solid rgba(255,255,255,0.22)"></div>
<div class="t" style="left:409.4px;width:53.30000000000007px;top:107.62px;text-align:right;color:#252423;font-size:9.4px;letter-spacing:0.15px;-webkit-text-stroke:0.3px #252423;line-height:10px">35,231</div>
<div class="a" style="left:465.1px;top:105.12px;width:53.59999999999991px;height:17.52px;background:#e6d1e8;border-left:1px solid rgba(255,255,255,0.22);border-top:1px solid rgba(255,255,255,0.22)"></div>
<div class="t" style="left:465.70000000000005px;width:50.59999999999991px;top:107.62px;text-align:right;color:#252423;font-size:9.4px;letter-spacing:0.15px;-webkit-text-stroke:0.3px #252423;line-height:10px">47,379</div>
<div class="a" style="left:518.6999999999999px;top:105.12px;width:57.10000000000002px;height:17.52px;background:#e8d4e9;border-left:1px solid rgba(255,255,255,0.22);border-top:1px solid rgba(255,255,255,0.22)"></div>
<div class="t" style="left:519.3px;width:54.10000000000002px;top:107.62px;text-align:right;color:#252423;font-size:9.4px;letter-spacing:0.15px;-webkit-text-stroke:0.3px #252423;line-height:10px">34,016</div>
<div class="a" style="left:575.8px;top:105.12px;width:51.80000000000007px;height:17.52px;background:#e8d4e9;border-left:1px solid rgba(255,255,255,0.22);border-top:1px solid rgba(255,255,255,0.22)"></div>
<div class="t" style="left:576.4px;width:48.80000000000007px;top:107.62px;text-align:right;color:#252423;font-size:9.4px;letter-spacing:0.15px;-webkit-text-stroke:0.3px #252423;line-height:10px">34,016</div>
<div class="a" style="left:627.6px;top:105.12px;width:56.39999999999998px;height:17.52px;background:#e7d3e9;border-left:1px solid rgba(255,255,255,0.22);border-top:1px solid rgba(255,255,255,0.22)"></div>
<div class="t" style="left:628.2px;width:53.39999999999998px;top:107.62px;text-align:right;color:#252423;font-size:9.4px;letter-spacing:0.15px;-webkit-text-stroke:0.3px #252423;line-height:10px">40,090</div>
<div class="a" style="left:684.0px;top:105.12px;width:53.0px;height:17.52px;background:#e7d2e8;border-left:1px solid rgba(255,255,255,0.22);border-top:1px solid rgba(255,255,255,0.22)"></div>
<div class="t" style="left:684.6px;width:50.0px;top:107.62px;text-align:right;color:#252423;font-size:9.4px;letter-spacing:0.15px;-webkit-text-stroke:0.3px #252423;line-height:10px">43,735</div>
<div class="a" style="left:737.0px;top:105.12px;width:63.999999999999886px;height:17.52px;background:#e6d1e8;border-left:1px solid rgba(255,255,255,0.22);border-top:1px solid rgba(255,255,255,0.22)"></div>
<div class="t" style="left:737.6px;width:60.999999999999886px;top:107.62px;text-align:right;color:#252423;font-size:9.4px;letter-spacing:0.15px;-webkit-text-stroke:0.3px #252423;line-height:10px">47,379</div>
<div class="a" style="left:800.9999999999999px;top:105.12px;width:56.0px;height:17.52px;background:#e5cfe7;border-left:1px solid rgba(255,255,255,0.22);border-top:1px solid rgba(255,255,255,0.22)"></div>
<div class="t" style="left:801.5999999999999px;width:53.0px;top:107.62px;text-align:right;color:#252423;font-size:9.4px;letter-spacing:0.15px;-webkit-text-stroke:0.3px #252423;line-height:10px">55,883</div>
<div class="t" style="left:857.5999999999999px;width:56.200000000000045px;top:107.62px;text-align:right;color:#252423;font-size:9.4px;letter-spacing:0.15px;-webkit-text-stroke:0.3px #252423;line-height:10px">447,065</div>
<div class="a" style="left:3.8000000000000114px;top:122.64px;width:196.2px;height:17.52px;background:#ececec"></div>
<div class="a" style="left:857.5999999999999px;top:122.64px;width:61.200000000000045px;height:17.52px;background:#ececec"></div>
<div class="t" style="left:9px;top:126.44px;color:#252423;font-size:11.9px;line-height:12px;letter-spacing:normal">Mountain-400-W</div>
<div class="a" style="left:200.4px;top:122.64px;width:52.30000000000001px;height:17.52px;background:#ead9ec;border-left:1px solid rgba(255,255,255,0.22);border-top:1px solid rgba(255,255,255,0.22)"></div>
<div class="t" style="left:201px;width:49.30000000000001px;top:125.14px;text-align:right;color:#252423;font-size:9.4px;letter-spacing:0.15px;-webkit-text-stroke:0.3px #252423;line-height:10px">17,698</div>
<div class="a" style="left:252.70000000000002px;top:122.64px;width:50.19999999999999px;height:17.52px;background:#ebd9ec;border-left:1px solid rgba(255,255,255,0.22);border-top:1px solid rgba(255,255,255,0.22)"></div>
<div class="t" style="left:253.3px;width:47.19999999999999px;top:125.14px;text-align:right;color:#252423;font-size:9.4px;letter-spacing:0.15px;-webkit-text-stroke:0.3px #252423;line-height:10px">16,929</div>
<div class="a" style="left:302.9px;top:122.64px;width:52.799999999999955px;height:17.52px;background:#ead7eb;border-left:1px solid rgba(255,255,255,0.22);border-top:1px solid rgba(255,255,255,0.22)"></div>
<div class="t" style="left:303.5px;width:49.799999999999955px;top:125.14px;text-align:right;color:#252423;font-size:9.4px;letter-spacing:0.15px;-webkit-text-stroke:0.3px #252423;line-height:10px">22,315</div>
<div class="a" style="left:355.69999999999993px;top:122.64px;width:53.10000000000002px;height:17.52px;background:#e9d7eb;border-left:1px solid rgba(255,255,255,0.22);border-top:1px solid rgba(255,255,255,0.22)"></div>
<div class="t" style="left:356.29999999999995px;width:50.10000000000002px;top:125.14px;text-align:right;color:#252423;font-size:9.4px;letter-spacing:0.15px;-webkit-text-stroke:0.3px #252423;line-height:10px">24,624</div>
<div class="a" style="left:408.79999999999995px;top:122.64px;width:56.30000000000007px;height:17.52px;background:#e9d5ea;border-left:1px solid rgba(255,255,255,0.22);border-top:1px solid rgba(255,255,255,0.22)"></div>
<div class="t" style="left:409.4px;width:53.30000000000007px;top:125.14px;text-align:right;color:#252423;font-size:9.4px;letter-spacing:0.15px;-webkit-text-stroke:0.3px #252423;line-height:10px">30,010</div>
<div class="a" style="left:465.1px;top:122.64px;width:53.59999999999991px;height:17.52px;background:#e6d1e8;border-left:1px solid rgba(255,255,255,0.22);border-top:1px solid rgba(255,255,255,0.22)"></div>
<div class="t" style="left:465.70000000000005px;width:50.59999999999991px;top:125.14px;text-align:right;color:#252423;font-size:9.4px;letter-spacing:0.15px;-webkit-text-stroke:0.3px #252423;line-height:10px">46,939</div>
<div class="a" style="left:518.6999999999999px;top:122.64px;width:57.10000000000002px;height:17.52px;background:#e8d4e9;border-left:1px solid rgba(255,255,255,0.22);border-top:1px solid rgba(255,255,255,0.22)"></div>
<div class="t" style="left:519.3px;width:54.10000000000002px;top:125.14px;text-align:right;color:#252423;font-size:9.4px;letter-spacing:0.15px;-webkit-text-stroke:0.3px #252423;line-height:10px">33,858</div>
<div class="a" style="left:575.8px;top:122.64px;width:51.80000000000007px;height:17.52px;background:#e8d4e9;border-left:1px solid rgba(255,255,255,0.22);border-top:1px solid rgba(255,255,255,0.22)"></div>
<div class="t" style="left:576.4px;width:48.80000000000007px;top:125.14px;text-align:right;color:#252423;font-size:9.4px;letter-spacing:0.15px;-webkit-text-stroke:0.3px #252423;line-height:10px">34,627</div>
<div class="a" style="left:627.6px;top:122.64px;width:56.39999999999998px;height:17.52px;background:#e7d3e9;border-left:1px solid rgba(255,255,255,0.22);border-top:1px solid rgba(255,255,255,0.22)"></div>
<div class="t" style="left:628.2px;width:53.39999999999998px;top:125.14px;text-align:right;color:#252423;font-size:9.4px;letter-spacing:0.15px;-webkit-text-stroke:0.3px #252423;line-height:10px">40,783</div>
<div class="a" style="left:684.0px;top:122.64px;width:53.0px;height:17.52px;background:#e5cfe7;border-left:1px solid rgba(255,255,255,0.22);border-top:1px solid rgba(255,255,255,0.22)"></div>
<div class="t" style="left:684.6px;width:50.0px;top:125.14px;text-align:right;color:#252423;font-size:9.4px;letter-spacing:0.15px;-webkit-text-stroke:0.3px #252423;line-height:10px">54,634</div>
<div class="a" style="left:737.0px;top:122.64px;width:63.999999999999886px;height:17.52px;background:#e7d2e8;border-left:1px solid rgba(255,255,255,0.22);border-top:1px solid rgba(255,255,255,0.22)"></div>
<div class="t" style="left:737.6px;width:60.999999999999886px;top:125.14px;text-align:right;color:#252423;font-size:9.4px;letter-spacing:0.15px;-webkit-text-stroke:0.3px #252423;line-height:10px">42,322</div>
<div class="a" style="left:800.9999999999999px;top:122.64px;width:56.0px;height:17.52px;background:#e5d0e7;border-left:1px solid rgba(255,255,255,0.22);border-top:1px solid rgba(255,255,255,0.22)"></div>
<div class="t" style="left:801.5999999999999px;width:53.0px;top:125.14px;text-align:right;color:#252423;font-size:9.4px;letter-spacing:0.15px;-webkit-text-stroke:0.3px #252423;line-height:10px">52,325</div>
<div class="t" style="left:857.5999999999999px;width:56.200000000000045px;top:125.14px;text-align:right;color:#252423;font-size:9.4px;letter-spacing:0.15px;-webkit-text-stroke:0.3px #252423;line-height:10px">417,064</div>
<div class="t" style="left:9px;top:143.96px;color:#252423;font-size:11.9px;line-height:12px;letter-spacing:normal">Touring-3000</div>
<div class="a" style="left:200.4px;top:140.16px;width:52.30000000000001px;height:17.52px;background:#ead8eb;border-left:1px solid rgba(255,255,255,0.22);border-top:1px solid rgba(255,255,255,0.22)"></div>
<div class="t" style="left:201px;width:49.30000000000001px;top:142.66px;text-align:right;color:#252423;font-size:9.4px;letter-spacing:0.15px;-webkit-text-stroke:0.3px #252423;line-height:10px">19,301</div>
<div class="a" style="left:252.70000000000002px;top:140.16px;width:50.19999999999999px;height:17.52px;background:#ebd9ec;border-left:1px solid rgba(255,255,255,0.22);border-top:1px solid rgba(255,255,255,0.22)"></div>
<div class="t" style="left:253.3px;width:47.19999999999999px;top:142.66px;text-align:right;color:#252423;font-size:9.4px;letter-spacing:0.15px;-webkit-text-stroke:0.3px #252423;line-height:10px">16,332</div>
<div class="a" style="left:302.9px;top:140.16px;width:52.799999999999955px;height:17.52px;background:#e9d7eb;border-left:1px solid rgba(255,255,255,0.22);border-top:1px solid rgba(255,255,255,0.22)"></div>
<div class="t" style="left:303.5px;width:49.799999999999955px;top:142.66px;text-align:right;color:#252423;font-size:9.4px;letter-spacing:0.15px;-webkit-text-stroke:0.3px #252423;line-height:10px">24,498</div>
<div class="a" style="left:355.69999999999993px;top:140.16px;width:53.10000000000002px;height:17.52px;background:#ead7eb;border-left:1px solid rgba(255,255,255,0.22);border-top:1px solid rgba(255,255,255,0.22)"></div>
<div class="t" style="left:356.29999999999995px;width:50.10000000000002px;top:142.66px;text-align:right;color:#252423;font-size:9.4px;letter-spacing:0.15px;-webkit-text-stroke:0.3px #252423;line-height:10px">22,271</div>
<div class="a" style="left:408.79999999999995px;top:140.16px;width:56.30000000000007px;height:17.52px;background:#e9d6ea;border-left:1px solid rgba(255,255,255,0.22);border-top:1px solid rgba(255,255,255,0.22)"></div>
<div class="t" style="left:409.4px;width:53.30000000000007px;top:142.66px;text-align:right;color:#252423;font-size:9.4px;letter-spacing:0.15px;-webkit-text-stroke:0.3px #252423;line-height:10px">28,952</div>
<div class="a" style="left:465.1px;top:140.16px;width:53.59999999999991px;height:17.52px;background:#e6d0e7;border-left:1px solid rgba(255,255,255,0.22);border-top:1px solid rgba(255,255,255,0.22)"></div>
<div class="t" style="left:465.70000000000005px;width:50.59999999999991px;top:142.66px;text-align:right;color:#252423;font-size:9.4px;letter-spacing:0.15px;-webkit-text-stroke:0.3px #252423;line-height:10px">50,480</div>
<div class="a" style="left:518.6999999999999px;top:140.16px;width:57.10000000000002px;height:17.52px;background:#e8d5ea;border-left:1px solid rgba(255,255,255,0.22);border-top:1px solid rgba(255,255,255,0.22)"></div>
<div class="t" style="left:519.3px;width:54.10000000000002px;top:142.66px;text-align:right;color:#252423;font-size:9.4px;letter-spacing:0.15px;-webkit-text-stroke:0.3px #252423;line-height:10px">33,406</div>
<div class="a" style="left:575.8px;top:140.16px;width:51.80000000000007px;height:17.52px;background:#e9d5ea;border-left:1px solid rgba(255,255,255,0.22);border-top:1px solid rgba(255,255,255,0.22)"></div>
<div class="t" style="left:576.4px;width:48.80000000000007px;top:142.66px;text-align:right;color:#252423;font-size:9.4px;letter-spacing:0.15px;-webkit-text-stroke:0.3px #252423;line-height:10px">30,436</div>
<div class="a" style="left:627.6px;top:140.16px;width:56.39999999999998px;height:17.52px;background:#e8d4e9;border-left:1px solid rgba(255,255,255,0.22);border-top:1px solid rgba(255,255,255,0.22)"></div>
<div class="t" style="left:628.2px;width:53.39999999999998px;top:142.66px;text-align:right;color:#252423;font-size:9.4px;letter-spacing:0.15px;-webkit-text-stroke:0.3px #252423;line-height:10px">35,633</div>
<div class="a" style="left:684.0px;top:140.16px;width:53.0px;height:17.52px;background:#e7d3e8;border-left:1px solid rgba(255,255,255,0.22);border-top:1px solid rgba(255,255,255,0.22)"></div>
<div class="t" style="left:684.6px;width:50.0px;top:142.66px;text-align:right;color:#252423;font-size:9.4px;letter-spacing:0.15px;-webkit-text-stroke:0.3px #252423;line-height:10px">41,572</div>
<div class="a" style="left:737.0px;top:140.16px;width:63.999999999999886px;height:17.52px;background:#e6d1e8;border-left:1px solid rgba(255,255,255,0.22);border-top:1px solid rgba(255,255,255,0.22)"></div>
<div class="t" style="left:737.6px;width:60.999999999999886px;top:142.66px;text-align:right;color:#252423;font-size:9.4px;letter-spacing:0.15px;-webkit-text-stroke:0.3px #252423;line-height:10px">46,768</div>
<div class="a" style="left:800.9999999999999px;top:140.16px;width:56.0px;height:17.52px;background:#e6d1e7;border-left:1px solid rgba(255,255,255,0.22);border-top:1px solid rgba(255,255,255,0.22)"></div>
<div class="t" style="left:801.5999999999999px;width:53.0px;top:142.66px;text-align:right;color:#252423;font-size:9.4px;letter-spacing:0.15px;-webkit-text-stroke:0.3px #252423;line-height:10px">48,995</div>
<div class="t" style="left:857.5999999999999px;width:56.200000000000045px;top:142.66px;text-align:right;color:#252423;font-size:9.4px;letter-spacing:0.15px;-webkit-text-stroke:0.3px #252423;line-height:10px">398,642</div>
<div class="a" style="left:3.8000000000000114px;top:157.68px;width:196.2px;height:17.52px;background:#ececec"></div>
<div class="a" style="left:857.5999999999999px;top:157.68px;width:61.200000000000045px;height:17.52px;background:#ececec"></div>
<div class="t" style="left:9px;top:161.48000000000002px;color:#252423;font-size:11.9px;line-height:12px;letter-spacing:normal">Mountain-500</div>
<div class="a" style="left:200.4px;top:157.68px;width:52.30000000000001px;height:17.52px;background:#ebdaec;border-left:1px solid rgba(255,255,255,0.22);border-top:1px solid rgba(255,255,255,0.22)"></div>
<div class="t" style="left:201px;width:49.30000000000001px;top:160.18px;text-align:right;color:#252423;font-size:9.4px;letter-spacing:0.15px;-webkit-text-stroke:0.3px #252423;line-height:10px">13,825</div>
<div class="a" style="left:252.70000000000002px;top:157.68px;width:50.19999999999999px;height:17.52px;background:#ebdaec;border-left:1px solid rgba(255,255,255,0.22);border-top:1px solid rgba(255,255,255,0.22)"></div>
<div class="t" style="left:253.3px;width:47.19999999999999px;top:160.18px;text-align:right;color:#252423;font-size:9.4px;letter-spacing:0.15px;-webkit-text-stroke:0.3px #252423;line-height:10px">12,105</div>
<div class="a" style="left:302.9px;top:157.68px;width:52.799999999999955px;height:17.52px;background:#ebd9ec;border-left:1px solid rgba(255,255,255,0.22);border-top:1px solid rgba(255,255,255,0.22)"></div>
<div class="t" style="left:303.5px;width:49.799999999999955px;top:160.18px;text-align:right;color:#252423;font-size:9.4px;letter-spacing:0.15px;-webkit-text-stroke:0.3px #252423;line-height:10px">16,475</div>
<div class="a" style="left:355.69999999999993px;top:157.68px;width:53.10000000000002px;height:17.52px;background:#ebd9ec;border-left:1px solid rgba(255,255,255,0.22);border-top:1px solid rgba(255,255,255,0.22)"></div>
<div class="t" style="left:356.29999999999995px;width:50.10000000000002px;top:160.18px;text-align:right;color:#252423;font-size:9.4px;letter-spacing:0.15px;-webkit-text-stroke:0.3px #252423;line-height:10px">14,415</div>
<div class="a" style="left:408.79999999999995px;top:157.68px;width:56.30000000000007px;height:17.52px;background:#ead8eb;border-left:1px solid rgba(255,255,255,0.22);border-top:1px solid rgba(255,255,255,0.22)"></div>
<div class="t" style="left:409.4px;width:53.30000000000007px;top:160.18px;text-align:right;color:#252423;font-size:9.4px;letter-spacing:0.15px;-webkit-text-stroke:0.3px #252423;line-height:10px">18,885</div>
<div class="a" style="left:465.1px;top:157.68px;width:53.59999999999991px;height:17.52px;background:#e8d5ea;border-left:1px solid rgba(255,255,255,0.22);border-top:1px solid rgba(255,255,255,0.22)"></div>
<div class="t" style="left:465.70000000000005px;width:50.59999999999991px;top:160.18px;text-align:right;color:#252423;font-size:9.4px;letter-spacing:0.15px;-webkit-text-stroke:0.3px #252423;line-height:10px">30,839</div>
<div class="a" style="left:518.6999999999999px;top:157.68px;width:57.10000000000002px;height:17.52px;background:#ead7eb;border-left:1px solid rgba(255,255,255,0.22);border-top:1px solid rgba(255,255,255,0.22)"></div>
<div class="t" style="left:519.3px;width:54.10000000000002px;top:160.18px;text-align:right;color:#252423;font-size:9.4px;letter-spacing:0.15px;-webkit-text-stroke:0.3px #252423;line-height:10px">23,130</div>
<div class="a" style="left:575.8px;top:157.68px;width:51.80000000000007px;height:17.52px;background:#ead8eb;border-left:1px solid rgba(255,255,255,0.22);border-top:1px solid rgba(255,255,255,0.22)"></div>
<div class="t" style="left:576.4px;width:48.80000000000007px;top:160.18px;text-align:right;color:#252423;font-size:9.4px;letter-spacing:0.15px;-webkit-text-stroke:0.3px #252423;line-height:10px">21,610</div>
<div class="a" style="left:627.6px;top:157.68px;width:56.39999999999998px;height:17.52px;background:#e9d6eb;border-left:1px solid rgba(255,255,255,0.22);border-top:1px solid rgba(255,255,255,0.22)"></div>
<div class="t" style="left:628.2px;width:53.39999999999998px;top:160.18px;text-align:right;color:#252423;font-size:9.4px;letter-spacing:0.15px;-webkit-text-stroke:0.3px #252423;line-height:10px">25,905</div>
<div class="a" style="left:684.0px;top:157.68px;width:53.0px;height:17.52px;background:#e9d7eb;border-left:1px solid rgba(255,255,255,0.22);border-top:1px solid rgba(255,255,255,0.22)"></div>
<div class="t" style="left:684.6px;width:50.0px;top:160.18px;text-align:right;color:#252423;font-size:9.4px;letter-spacing:0.15px;-webkit-text-stroke:0.3px #252423;line-height:10px">25,315</div>
<div class="a" style="left:737.0px;top:157.68px;width:63.999999999999886px;height:17.52px;background:#e9d6ea;border-left:1px solid rgba(255,255,255,0.22);border-top:1px solid rgba(255,255,255,0.22)"></div>
<div class="t" style="left:737.6px;width:60.999999999999886px;top:160.18px;text-align:right;color:#252423;font-size:9.4px;letter-spacing:0.15px;-webkit-text-stroke:0.3px #252423;line-height:10px">28,704</div>
<div class="a" style="left:800.9999999999999px;top:157.68px;width:56.0px;height:17.52px;background:#e8d5ea;border-left:1px solid rgba(255,255,255,0.22);border-top:1px solid rgba(255,255,255,0.22)"></div>
<div class="t" style="left:801.5999999999999px;width:53.0px;top:160.18px;text-align:right;color:#252423;font-size:9.4px;letter-spacing:0.15px;-webkit-text-stroke:0.3px #252423;line-height:10px">32,019</div>
<div class="t" style="left:857.5999999999999px;width:56.200000000000045px;top:160.18px;text-align:right;color:#252423;font-size:9.4px;letter-spacing:0.15px;-webkit-text-stroke:0.3px #252423;line-height:10px">263,225</div>
<div class="t" style="left:9px;top:179.0px;color:#252423;font-size:11.9px;line-height:12px;letter-spacing:normal">Sport-100</div>
<div class="a" style="left:200.4px;top:175.2px;width:52.30000000000001px;height:17.52px;background:#ecdced;border-left:1px solid rgba(255,255,255,0.22);border-top:1px solid rgba(255,255,255,0.22)"></div>
<div class="t" style="left:201px;width:49.30000000000001px;top:177.7px;text-align:right;color:#252423;font-size:9.4px;letter-spacing:0.15px;-webkit-text-stroke:0.3px #252423;line-height:10px">5,773</div>
<div class="a" style="left:252.70000000000002px;top:175.2px;width:50.19999999999999px;height:17.52px;background:#ebd9ec;border-left:1px solid rgba(255,255,255,0.22);border-top:1px solid rgba(255,255,255,0.22)"></div>
<div class="t" style="left:253.3px;width:47.19999999999999px;top:177.7px;text-align:right;color:#252423;font-size:9.4px;letter-spacing:0.15px;-webkit-text-stroke:0.3px #252423;line-height:10px">14,591</div>
<div class="a" style="left:302.9px;top:175.2px;width:52.799999999999955px;height:17.52px;background:#ebd9ec;border-left:1px solid rgba(255,255,255,0.22);border-top:1px solid rgba(255,255,255,0.22)"></div>
<div class="t" style="left:303.5px;width:49.799999999999955px;top:177.7px;text-align:right;color:#252423;font-size:9.4px;letter-spacing:0.15px;-webkit-text-stroke:0.3px #252423;line-height:10px">16,725</div>
<div class="a" style="left:355.69999999999993px;top:175.2px;width:53.10000000000002px;height:17.52px;background:#ebd9ec;border-left:1px solid rgba(255,255,255,0.22);border-top:1px solid rgba(255,255,255,0.22)"></div>
<div class="t" style="left:356.29999999999995px;width:50.10000000000002px;top:177.7px;text-align:right;color:#252423;font-size:9.4px;letter-spacing:0.15px;-webkit-text-stroke:0.3px #252423;line-height:10px">15,641</div>
<div class="a" style="left:408.79999999999995px;top:175.2px;width:56.30000000000007px;height:17.52px;background:#ead8ec;border-left:1px solid rgba(255,255,255,0.22);border-top:1px solid rgba(255,255,255,0.22)"></div>
<div class="t" style="left:409.4px;width:53.30000000000007px;top:177.7px;text-align:right;color:#252423;font-size:9.4px;letter-spacing:0.15px;-webkit-text-stroke:0.3px #252423;line-height:10px">18,300</div>
<div class="a" style="left:465.1px;top:175.2px;width:53.59999999999991px;height:17.52px;background:#ead8eb;border-left:1px solid rgba(255,255,255,0.22);border-top:1px solid rgba(255,255,255,0.22)"></div>
<div class="t" style="left:465.70000000000005px;width:50.59999999999991px;top:177.7px;text-align:right;color:#252423;font-size:9.4px;letter-spacing:0.15px;-webkit-text-stroke:0.3px #252423;line-height:10px">21,064</div>
<div class="a" style="left:518.6999999999999px;top:175.2px;width:57.10000000000002px;height:17.52px;background:#ead8ec;border-left:1px solid rgba(255,255,255,0.22);border-top:1px solid rgba(255,255,255,0.22)"></div>
<div class="t" style="left:519.3px;width:54.10000000000002px;top:177.7px;text-align:right;color:#252423;font-size:9.4px;letter-spacing:0.15px;-webkit-text-stroke:0.3px #252423;line-height:10px">17,985</div>
<div class="a" style="left:575.8px;top:175.2px;width:51.80000000000007px;height:17.52px;background:#ead8eb;border-left:1px solid rgba(255,255,255,0.22);border-top:1px solid rgba(255,255,255,0.22)"></div>
<div class="t" style="left:576.4px;width:48.80000000000007px;top:177.7px;text-align:right;color:#252423;font-size:9.4px;letter-spacing:0.15px;-webkit-text-stroke:0.3px #252423;line-height:10px">19,210</div>
<div class="a" style="left:627.6px;top:175.2px;width:56.39999999999998px;height:17.52px;background:#ead8eb;border-left:1px solid rgba(255,255,255,0.22);border-top:1px solid rgba(255,255,255,0.22)"></div>
<div class="t" style="left:628.2px;width:53.39999999999998px;top:177.7px;text-align:right;color:#252423;font-size:9.4px;letter-spacing:0.15px;-webkit-text-stroke:0.3px #252423;line-height:10px">19,559</div>
<div class="a" style="left:684.0px;top:175.2px;width:53.0px;height:17.52px;background:#ead8eb;border-left:1px solid rgba(255,255,255,0.22);border-top:1px solid rgba(255,255,255,0.22)"></div>
<div class="t" style="left:684.6px;width:50.0px;top:177.7px;text-align:right;color:#252423;font-size:9.4px;letter-spacing:0.15px;-webkit-text-stroke:0.3px #252423;line-height:10px">21,729</div>
<div class="a" style="left:737.0px;top:175.2px;width:63.999999999999886px;height:17.52px;background:#ead7eb;border-left:1px solid rgba(255,255,255,0.22);border-top:1px solid rgba(255,255,255,0.22)"></div>
<div class="t" style="left:737.6px;width:60.999999999999886px;top:177.7px;text-align:right;color:#252423;font-size:9.4px;letter-spacing:0.15px;-webkit-text-stroke:0.3px #252423;line-height:10px">22,778</div>
<div class="a" style="left:800.9999999999999px;top:175.2px;width:56.0px;height:17.52px;background:#ead7eb;border-left:1px solid rgba(255,255,255,0.22);border-top:1px solid rgba(255,255,255,0.22)"></div>
<div class="t" style="left:801.5999999999999px;width:53.0px;top:177.7px;text-align:right;color:#252423;font-size:9.4px;letter-spacing:0.15px;-webkit-text-stroke:0.3px #252423;line-height:10px">22,674</div>
<div class="t" style="left:857.5999999999999px;width:56.200000000000045px;top:177.7px;text-align:right;color:#252423;font-size:9.4px;letter-spacing:0.15px;-webkit-text-stroke:0.3px #252423;line-height:10px">216,028</div>
<div class="a" style="left:3.8000000000000114px;top:192.72px;width:196.2px;height:17.52px;background:#ececec"></div>
<div class="a" style="left:857.5999999999999px;top:192.72px;width:61.200000000000045px;height:17.52px;background:#ececec"></div>
<div class="t" style="left:9px;top:196.52px;color:#252423;font-size:11.9px;line-height:12px;letter-spacing:-0.42px">Short-Sleeve Classic Jersey</div>
<div class="a" style="left:200.4px;top:192.72px;width:52.30000000000001px;height:17.52px;background:#eddcee;border-left:1px solid rgba(255,255,255,0.22);border-top:1px solid rgba(255,255,255,0.22)"></div>
<div class="t" style="left:201px;width:49.30000000000001px;top:195.22px;text-align:right;color:#252423;font-size:9.4px;letter-spacing:0.15px;-webkit-text-stroke:0.3px #252423;line-height:10px">3,185</div>
<div class="a" style="left:252.70000000000002px;top:192.72px;width:50.19999999999999px;height:17.52px;background:#ecdced;border-left:1px solid rgba(255,255,255,0.22);border-top:1px solid rgba(255,255,255,0.22)"></div>
<div class="t" style="left:253.3px;width:47.19999999999999px;top:195.22px;text-align:right;color:#252423;font-size:9.4px;letter-spacing:0.15px;-webkit-text-stroke:0.3px #252423;line-height:10px">5,183</div>
<div class="a" style="left:302.9px;top:192.72px;width:52.799999999999955px;height:17.52px;background:#ecdbed;border-left:1px solid rgba(255,255,255,0.22);border-top:1px solid rgba(255,255,255,0.22)"></div>
<div class="t" style="left:303.5px;width:49.799999999999955px;top:195.22px;text-align:right;color:#252423;font-size:9.4px;letter-spacing:0.15px;-webkit-text-stroke:0.3px #252423;line-height:10px">6,965</div>
<div class="a" style="left:355.69999999999993px;top:192.72px;width:53.10000000000002px;height:17.52px;background:#ecdbed;border-left:1px solid rgba(255,255,255,0.22);border-top:1px solid rgba(255,255,255,0.22)"></div>
<div class="t" style="left:356.29999999999995px;width:50.10000000000002px;top:195.22px;text-align:right;color:#252423;font-size:9.4px;letter-spacing:0.15px;-webkit-text-stroke:0.3px #252423;line-height:10px">6,371</div>
<div class="a" style="left:408.79999999999995px;top:192.72px;width:56.30000000000007px;height:17.52px;background:#ecdbed;border-left:1px solid rgba(255,255,255,0.22);border-top:1px solid rgba(255,255,255,0.22)"></div>
<div class="t" style="left:409.4px;width:53.30000000000007px;top:195.22px;text-align:right;color:#252423;font-size:9.4px;letter-spacing:0.15px;-webkit-text-stroke:0.3px #252423;line-height:10px">6,479</div>
<div class="a" style="left:465.1px;top:192.72px;width:53.59999999999991px;height:17.52px;background:#ecdbed;border-left:1px solid rgba(255,255,255,0.22);border-top:1px solid rgba(255,255,255,0.22)"></div>
<div class="t" style="left:465.70000000000005px;width:50.59999999999991px;top:195.22px;text-align:right;color:#252423;font-size:9.4px;letter-spacing:0.15px;-webkit-text-stroke:0.3px #252423;line-height:10px">8,098</div>
<div class="a" style="left:518.6999999999999px;top:192.72px;width:57.10000000000002px;height:17.52px;background:#ecdbed;border-left:1px solid rgba(255,255,255,0.22);border-top:1px solid rgba(255,255,255,0.22)"></div>
<div class="t" style="left:519.3px;width:54.10000000000002px;top:195.22px;text-align:right;color:#252423;font-size:9.4px;letter-spacing:0.15px;-webkit-text-stroke:0.3px #252423;line-height:10px">7,667</div>
<div class="a" style="left:575.8px;top:192.72px;width:51.80000000000007px;height:17.52px;background:#ecdbed;border-left:1px solid rgba(255,255,255,0.22);border-top:1px solid rgba(255,255,255,0.22)"></div>
<div class="t" style="left:576.4px;width:48.80000000000007px;top:195.22px;text-align:right;color:#252423;font-size:9.4px;letter-spacing:0.15px;-webkit-text-stroke:0.3px #252423;line-height:10px">7,343</div>
<div class="a" style="left:627.6px;top:192.72px;width:56.39999999999998px;height:17.52px;background:#ecdbed;border-left:1px solid rgba(255,255,255,0.22);border-top:1px solid rgba(255,255,255,0.22)"></div>
<div class="t" style="left:628.2px;width:53.39999999999998px;top:195.22px;text-align:right;color:#252423;font-size:9.4px;letter-spacing:0.15px;-webkit-text-stroke:0.3px #252423;line-height:10px">6,371</div>
<div class="a" style="left:684.0px;top:192.72px;width:53.0px;height:17.52px;background:#ecdbed;border-left:1px solid rgba(255,255,255,0.22);border-top:1px solid rgba(255,255,255,0.22)"></div>
<div class="t" style="left:684.6px;width:50.0px;top:195.22px;text-align:right;color:#252423;font-size:9.4px;letter-spacing:0.15px;-webkit-text-stroke:0.3px #252423;line-height:10px">7,937</div>
<div class="a" style="left:737.0px;top:192.72px;width:63.999999999999886px;height:17.52px;background:#ecdbed;border-left:1px solid rgba(255,255,255,0.22);border-top:1px solid rgba(255,255,255,0.22)"></div>
<div class="t" style="left:737.6px;width:60.999999999999886px;top:195.22px;text-align:right;color:#252423;font-size:9.4px;letter-spacing:0.15px;-webkit-text-stroke:0.3px #252423;line-height:10px">7,721</div>
<div class="a" style="left:800.9999999999999px;top:192.72px;width:56.0px;height:17.52px;background:#ecdbed;border-left:1px solid rgba(255,255,255,0.22);border-top:1px solid rgba(255,255,255,0.22)"></div>
<div class="t" style="left:801.5999999999999px;width:53.0px;top:195.22px;text-align:right;color:#252423;font-size:9.4px;letter-spacing:0.15px;-webkit-text-stroke:0.3px #252423;line-height:10px">9,772</div>
<div class="t" style="left:857.5999999999999px;width:56.200000000000045px;top:195.22px;text-align:right;color:#252423;font-size:9.4px;letter-spacing:0.15px;-webkit-text-stroke:0.3px #252423;line-height:10px">83,091</div>
<div class="t" style="left:9px;top:214.04000000000002px;color:#252423;font-size:11.9px;line-height:12px;letter-spacing:-0.42px">Long-Sleeve Logo Jersey</div>
<div class="a" style="left:200.4px;top:210.24px;width:52.30000000000001px;height:17.52px;background:#edddee;border-left:1px solid rgba(255,255,255,0.22);border-top:1px solid rgba(255,255,255,0.22)"></div>
<div class="t" style="left:201px;width:49.30000000000001px;top:212.74px;text-align:right;color:#252423;font-size:9.4px;letter-spacing:0.15px;-webkit-text-stroke:0.3px #252423;line-height:10px">1,050</div>
<div class="a" style="left:252.70000000000002px;top:210.24px;width:50.19999999999999px;height:17.52px;background:#ecdced;border-left:1px solid rgba(255,255,255,0.22);border-top:1px solid rgba(255,255,255,0.22)"></div>
<div class="t" style="left:253.3px;width:47.19999999999999px;top:212.74px;text-align:right;color:#252423;font-size:9.4px;letter-spacing:0.15px;-webkit-text-stroke:0.3px #252423;line-height:10px">5,199</div>
<div class="a" style="left:302.9px;top:210.24px;width:52.799999999999955px;height:17.52px;background:#ecdbed;border-left:1px solid rgba(255,255,255,0.22);border-top:1px solid rgba(255,255,255,0.22)"></div>
<div class="t" style="left:303.5px;width:49.799999999999955px;top:212.74px;text-align:right;color:#252423;font-size:9.4px;letter-spacing:0.15px;-webkit-text-stroke:0.3px #252423;line-height:10px">6,599</div>
<div class="a" style="left:355.69999999999993px;top:210.24px;width:53.10000000000002px;height:17.52px;background:#ecdced;border-left:1px solid rgba(255,255,255,0.22);border-top:1px solid rgba(255,255,255,0.22)"></div>
<div class="t" style="left:356.29999999999995px;width:50.10000000000002px;top:212.74px;text-align:right;color:#252423;font-size:9.4px;letter-spacing:0.15px;-webkit-text-stroke:0.3px #252423;line-height:10px">5,849</div>
<div class="a" style="left:408.79999999999995px;top:210.24px;width:56.30000000000007px;height:17.52px;background:#ecdbed;border-left:1px solid rgba(255,255,255,0.22);border-top:1px solid rgba(255,255,255,0.22)"></div>
<div class="t" style="left:409.4px;width:53.30000000000007px;top:212.74px;text-align:right;color:#252423;font-size:9.4px;letter-spacing:0.15px;-webkit-text-stroke:0.3px #252423;line-height:10px">6,949</div>
<div class="a" style="left:465.1px;top:210.24px;width:53.59999999999991px;height:17.52px;background:#ecdbed;border-left:1px solid rgba(255,255,255,0.22);border-top:1px solid rgba(255,255,255,0.22)"></div>
<div class="t" style="left:465.70000000000005px;width:50.59999999999991px;top:212.74px;text-align:right;color:#252423;font-size:9.4px;letter-spacing:0.15px;-webkit-text-stroke:0.3px #252423;line-height:10px">7,498</div>
<div class="a" style="left:518.6999999999999px;top:210.24px;width:57.10000000000002px;height:17.52px;background:#ecdbed;border-left:1px solid rgba(255,255,255,0.22);border-top:1px solid rgba(255,255,255,0.22)"></div>
<div class="t" style="left:519.3px;width:54.10000000000002px;top:212.74px;text-align:right;color:#252423;font-size:9.4px;letter-spacing:0.15px;-webkit-text-stroke:0.3px #252423;line-height:10px">7,998</div>
<div class="a" style="left:575.8px;top:210.24px;width:51.80000000000007px;height:17.52px;background:#ecdbed;border-left:1px solid rgba(255,255,255,0.22);border-top:1px solid rgba(255,255,255,0.22)"></div>
<div class="t" style="left:576.4px;width:48.80000000000007px;top:212.74px;text-align:right;color:#252423;font-size:9.4px;letter-spacing:0.15px;-webkit-text-stroke:0.3px #252423;line-height:10px">7,498</div>
<div class="a" style="left:627.6px;top:210.24px;width:56.39999999999998px;height:17.52px;background:#ecdbed;border-left:1px solid rgba(255,255,255,0.22);border-top:1px solid rgba(255,255,255,0.22)"></div>
<div class="t" style="left:628.2px;width:53.39999999999998px;top:212.74px;text-align:right;color:#252423;font-size:9.4px;letter-spacing:0.15px;-webkit-text-stroke:0.3px #252423;line-height:10px">7,898</div>
<div class="a" style="left:684.0px;top:210.24px;width:53.0px;height:17.52px;background:#ecdbed;border-left:1px solid rgba(255,255,255,0.22);border-top:1px solid rgba(255,255,255,0.22)"></div>
<div class="t" style="left:684.6px;width:50.0px;top:212.74px;text-align:right;color:#252423;font-size:9.4px;letter-spacing:0.15px;-webkit-text-stroke:0.3px #252423;line-height:10px">8,298</div>
<div class="a" style="left:737.0px;top:210.24px;width:63.999999999999886px;height:17.52px;background:#ecdbed;border-left:1px solid rgba(255,255,255,0.22);border-top:1px solid rgba(255,255,255,0.22)"></div>
<div class="t" style="left:737.6px;width:60.999999999999886px;top:212.74px;text-align:right;color:#252423;font-size:9.4px;letter-spacing:0.15px;-webkit-text-stroke:0.3px #252423;line-height:10px">8,198</div>
<div class="a" style="left:800.9999999999999px;top:210.24px;width:56.0px;height:17.52px;background:#ecdbed;border-left:1px solid rgba(255,255,255,0.22);border-top:1px solid rgba(255,255,255,0.22)"></div>
<div class="t" style="left:801.5999999999999px;width:53.0px;top:212.74px;text-align:right;color:#252423;font-size:9.4px;letter-spacing:0.15px;-webkit-text-stroke:0.3px #252423;line-height:10px">8,448</div>
<div class="t" style="left:857.5999999999999px;width:56.200000000000045px;top:212.74px;text-align:right;color:#252423;font-size:9.4px;letter-spacing:0.15px;-webkit-text-stroke:0.3px #252423;line-height:10px">83,482</div>
</div>
<div class="a" style="left:233px;top:227.6px;width:915px;height:1.3px;background:#a774bf"></div>
<div class="a" style="left:429px;top:228px;width:1.2px;height:236px;background:#9a62b4"></div>
<div class="t" style="left:238px;top:450.2px;color:#252423;font-size:12px;font-weight:bold;line-height:12px">Total</div>
<div class="t" style="left:430px;width:49.30000000000001px;top:450.2px;text-align:right;color:#252423;font-size:9.4px;letter-spacing:0.15px;-webkit-text-stroke:0.25px #252423;line-height:10px">857,690</div>
<div class="t" style="left:482.3px;width:47.19999999999999px;top:450.2px;text-align:right;color:#252423;font-size:9.4px;letter-spacing:0.15px;-webkit-text-stroke:0.25px #252423;line-height:10px">771,349</div>
<div class="t" style="left:532.5px;width:49.799999999999955px;top:450.2px;text-align:right;color:#252423;font-size:9.4px;letter-spacing:0.15px;-webkit-text-stroke:0.25px #252423;line-height:10px">1,049,907</div>
<div class="t" style="left:585.3px;width:50.10000000000002px;top:450.2px;text-align:right;color:#252423;font-size:9.4px;letter-spacing:0.15px;-webkit-text-stroke:0.25px #252423;line-height:10px">1,046,023</div>
<div class="t" style="left:638.4px;width:53.30000000000007px;top:450.2px;text-align:right;color:#252423;font-size:9.4px;letter-spacing:0.15px;-webkit-text-stroke:0.25px #252423;line-height:10px">1,284,593</div>
<div class="t" style="left:694.7px;width:50.59999999999991px;top:450.2px;text-align:right;color:#252423;font-size:9.4px;letter-spacing:0.15px;-webkit-text-stroke:0.25px #252423;line-height:10px">1,643,178</div>
<div class="t" style="left:748.3px;width:54.10000000000002px;top:450.2px;text-align:right;color:#252423;font-size:9.4px;letter-spacing:0.15px;-webkit-text-stroke:0.25px #252423;line-height:10px">1,371,676</div>
<div class="t" style="left:805.4px;width:48.80000000000007px;top:450.2px;text-align:right;color:#252423;font-size:9.4px;letter-spacing:0.15px;-webkit-text-stroke:0.25px #252423;line-height:10px">1,551,066</div>
<div class="t" style="left:857.2px;width:53.39999999999998px;top:450.2px;text-align:right;color:#252423;font-size:9.4px;letter-spacing:0.15px;-webkit-text-stroke:0.25px #252423;line-height:10px">1,447,496</div>
<div class="t" style="left:913.6px;width:50.0px;top:450.2px;text-align:right;color:#252423;font-size:9.4px;letter-spacing:0.15px;-webkit-text-stroke:0.25px #252423;line-height:10px">1,673,293</div>
<div class="t" style="left:966.6px;width:60.999999999999886px;top:450.2px;text-align:right;color:#252423;font-size:9.4px;letter-spacing:0.15px;-webkit-text-stroke:0.25px #252423;line-height:10px">1,780,920</div>
<div class="t" style="left:1030.6px;width:53.0px;top:450.2px;text-align:right;color:#252423;font-size:9.4px;letter-spacing:0.15px;-webkit-text-stroke:0.25px #252423;line-height:10px">1,874,360</div>
<div class="t" style="left:1086.6px;width:56.200000000000045px;top:450.2px;text-align:right;color:#252423;font-size:9.4px;letter-spacing:0.15px;-webkit-text-stroke:0.25px #252423;line-height:10px">16,351,550</div>
<div class="a" style="left:1157.5px;top:203px;width:6px;height:87px;background:#a8a8a8;border-radius:3px"></div>
<div class="a" style="left:229px;top:483px;width:408px;height:256px;background:#fff"></div>
<div class="t" style="left:233.5px;top:486.5px;color:#252423;font-size:13px;letter-spacing:0.6px;-webkit-text-stroke:0.2px #252423;line-height:14px">Sales by Sub Category</div>
<svg class="a" style="left:0;top:0" width="1177" height="741"><path d="M376.80,538.30 A81.5,81.5 0 0 1 429.26,682.17 L408.21,657.14 A48.8,48.8 0 0 0 376.80,571.00 Z" fill="#701a7d"/><path d="M429.26,682.17 A81.5,81.5 0 0 1 298.22,641.43 L329.75,632.75 A48.8,48.8 0 0 0 408.21,657.14 Z" fill="#4aa96c"/><path d="M298.22,641.43 A81.5,81.5 0 0 1 347.58,543.72 L359.30,574.24 A48.8,48.8 0 0 0 329.75,632.75 Z" fill="#e8734a"/><path d="M347.58,543.72 A81.5,81.5 0 0 1 354.48,541.41 L363.44,572.86 A48.8,48.8 0 0 0 359.30,574.24 Z" fill="#3a49b5"/><path d="M354.48,541.41 A81.5,81.5 0 0 1 361.35,539.78 L367.55,571.88 A48.8,48.8 0 0 0 363.44,572.86 Z" fill="#118dff"/><path d="M361.35,539.78 A81.5,81.5 0 0 1 366.41,538.97 L370.58,571.40 A48.8,48.8 0 0 0 367.55,571.88 Z" fill="#12239e"/><path d="M366.41,538.97 A81.5,81.5 0 0 1 368.65,538.71 L371.92,571.24 A48.8,48.8 0 0 0 370.58,571.40 Z" fill="#e66c37"/><path d="M368.65,538.71 A81.5,81.5 0 0 1 370.43,538.55 L372.99,571.15 A48.8,48.8 0 0 0 371.92,571.24 Z" fill="#6b007b"/><path d="M370.43,538.55 A81.5,81.5 0 0 1 371.87,538.45 L373.85,571.09 A48.8,48.8 0 0 0 372.99,571.15 Z" fill="#e044a7"/><path d="M371.87,538.45 A81.5,81.5 0 0 1 372.91,538.39 L374.47,571.06 A48.8,48.8 0 0 0 373.85,571.09 Z" fill="#744ec2"/><path d="M372.91,538.39 A81.5,81.5 0 0 1 374.01,538.35 L375.13,571.03 A48.8,48.8 0 0 0 374.47,571.06 Z" fill="#d9b300"/><path d="M374.01,538.35 A81.5,81.5 0 0 1 374.95,538.32 L375.69,571.01 A48.8,48.8 0 0 0 375.13,571.03 Z" fill="#d64550"/><path d="M374.95,538.32 A81.5,81.5 0 0 1 375.58,538.31 L376.07,571.01 A48.8,48.8 0 0 0 375.69,571.01 Z" fill="#8a8a8a"/><path d="M375.58,538.31 A81.5,81.5 0 0 1 376.36,538.30 L376.54,571.00 A48.8,48.8 0 0 0 376.07,571.01 Z" fill="#1aab40"/><path d="M376.36,538.30 A81.5,81.5 0 0 1 376.80,538.30 L376.80,571.00 A48.8,48.8 0 0 0 376.54,571.00 Z" fill="#15c6f4"/><g stroke="#bdbdbd" stroke-width="1" fill="none"><polyline points="424,551.5 433,543.5 440,543.5"/><polyline points="304.5,553 314.4,553 320.3,559"/><polyline points="333,534.5 343,534.5 349,541"/><polyline points="364.5,528.3 375.5,528.3 375.5,537.3"/><polyline points="340,707.6 349.5,707.6 353,699"/></g></svg>
<div class="t" style="left:443px;top:535px;color:#605e5c;font-size:9.3px;font-weight:bold;line-height:10px">6,340K</div>
<div class="t" style="left:443px;top:546.5px;color:#605e5c;font-size:9.3px;font-weight:bold;line-height:10px">(38.77%)</div>
<div class="t" style="left:270.5px;top:542.5px;color:#605e5c;font-size:9.3px;font-weight:bold;line-height:10px">3,823K</div>
<div class="t" style="left:262px;top:554.5px;color:#605e5c;font-size:9.3px;font-weight:bold;line-height:10px">(23.38%)</div>
<div class="t" style="left:274.5px;top:529px;color:#605e5c;font-size:9.3px;font-weight:bold;line-height:10px">232K (1.42%)</div>
<div class="t" style="left:333.5px;top:529px;color:#605e5c;font-size:9.3px;font-weight:bold;line-height:10px">(0.2%)</div>
<div class="t" style="left:344.5px;top:518px;color:#605e5c;font-size:9.3px;font-weight:bold;line-height:10px">33K</div>
<div class="t" style="left:264.5px;top:702.5px;color:#605e5c;font-size:9.3px;font-weight:bold;line-height:10px">5,196K (31.78%)</div>
<div class="t" style="left:521px;top:506.5px;color:#605e5c;font-size:11.6px;font-weight:bold;line-height:12px">Sub Category</div>
<div class="a" style="left:521px;top:527.7px;width:9px;height:9px;border-radius:50%;background:#701a7d"></div>
<div class="t" style="left:532.5px;top:525.7px;color:#605e5c;font-size:11.5px;line-height:12px">Mountain Bikes</div>
<div class="a" style="left:521px;top:549.94px;width:9px;height:9px;border-radius:50%;background:#4aa96c"></div>
<div class="t" style="left:532.5px;top:547.94px;color:#605e5c;font-size:11.5px;line-height:12px">Road Bikes</div>
<div class="a" style="left:521px;top:572.1800000000001px;width:9px;height:9px;border-radius:50%;background:#e8734a"></div>
<div class="t" style="left:532.5px;top:570.1800000000001px;color:#605e5c;font-size:11.5px;line-height:12px">Touring Bikes</div>
<div class="a" style="left:521px;top:594.4200000000001px;width:9px;height:9px;border-radius:50%;background:#3a49b5"></div>
<div class="t" style="left:532.5px;top:592.4200000000001px;color:#605e5c;font-size:11.5px;line-height:12px">Tires and Tubes</div>
<div class="a" style="left:521px;top:616.6600000000001px;width:9px;height:9px;border-radius:50%;background:#118dff"></div>
<div class="t" style="left:532.5px;top:614.6600000000001px;color:#605e5c;font-size:11.5px;line-height:12px">Helmets</div>
<div class="a" style="left:521px;top:638.9000000000001px;width:9px;height:9px;border-radius:50%;background:#12239e"></div>
<div class="t" style="left:532.5px;top:636.9000000000001px;color:#605e5c;font-size:11.5px;line-height:12px">Jerseys</div>
<div class="a" style="left:521px;top:661.1400000000001px;width:9px;height:9px;border-radius:50%;background:#e66c37"></div>
<div class="t" style="left:532.5px;top:659.1400000000001px;color:#605e5c;font-size:11.5px;line-height:12px">Shorts</div>
<div class="a" style="left:521px;top:683.38px;width:9px;height:9px;border-radius:50%;background:#6b007b"></div>
<div class="t" style="left:532.5px;top:681.38px;color:#605e5c;font-size:11.5px;line-height:12px">Bottles and Cages</div>
<div class="a" style="left:521px;top:705.62px;width:9px;height:9px;border-radius:50%;background:#e044a7"></div>
<div class="t" style="left:532.5px;top:703.62px;color:#605e5c;font-size:11.5px;line-height:12px">Fenders</div>
<svg class="a" style="left:572px;top:726px" width="11" height="6"><polygon points="0,0 11,0 5.5,6" fill="#252423"/></svg>
<div class="a" style="left:652.5px;top:483px;width:516px;height:256px;background:#fff"></div>
<div class="t" style="left:657.5px;top:487px;color:#252423;font-size:13px;letter-spacing:0.65px;-webkit-text-stroke:0.2px #252423;line-height:14px">Sales by Top 10 Category</div>
<div class="a" style="left:773px;top:519.7px;width:368.29999999999995px;height:15px;background:#8130a4"></div>
<div class="t" style="left:600px;width:165.7px;text-align:right;top:521.9000000000001px;color:#605e5c;font-size:10.4px;line-height:12px">Mountain Bikes</div>
<div class="t" style="left:1000px;width:134.5px;text-align:right;top:521.7px;color:#fff;font-size:10.6px;letter-spacing:-0.2px;line-height:12px">6.3M</div>
<div class="a" style="left:773px;top:539.6500000000001px;width:301.79999999999995px;height:15px;background:#8130a4"></div>
<div class="t" style="left:600px;width:165.7px;text-align:right;top:541.8500000000001px;color:#605e5c;font-size:10.4px;line-height:12px">Road Bikes</div>
<div class="t" style="left:1082.3px;top:541.6500000000001px;color:#605e5c;font-size:10.6px;letter-spacing:-0.2px;line-height:12px">5.2M</div>
<div class="a" style="left:773px;top:559.6px;width:222.29999999999995px;height:15px;background:#8130a4"></div>
<div class="t" style="left:600px;width:165.7px;text-align:right;top:561.8000000000001px;color:#605e5c;font-size:10.4px;line-height:12px">Touring Bikes</div>
<div class="t" style="left:1002.8px;top:561.6px;color:#605e5c;font-size:10.6px;letter-spacing:-0.2px;line-height:12px">3.8M</div>
<div class="a" style="left:773px;top:579.5500000000001px;width:13.899999999999977px;height:15px;background:#8130a4"></div>
<div class="t" style="left:600px;width:165.7px;text-align:right;top:581.7500000000001px;color:#605e5c;font-size:10.4px;line-height:12px">Tires and Tubes</div>
<div class="t" style="left:794.4px;top:581.5500000000001px;color:#605e5c;font-size:10.6px;letter-spacing:-0.2px;line-height:12px">0.2M</div>
<div class="a" style="left:773px;top:599.5px;width:12.600000000000023px;height:15px;background:#8130a4"></div>
<div class="t" style="left:600px;width:165.7px;text-align:right;top:601.7px;color:#605e5c;font-size:10.4px;line-height:12px">Helmets</div>
<div class="t" style="left:793.1px;top:601.5px;color:#605e5c;font-size:10.6px;letter-spacing:-0.2px;line-height:12px">0.2M</div>
<div class="a" style="left:773px;top:619.45px;width:9.899999999999977px;height:15px;background:#8130a4"></div>
<div class="t" style="left:600px;width:165.7px;text-align:right;top:621.6500000000001px;color:#605e5c;font-size:10.4px;line-height:12px">Jerseys</div>
<div class="t" style="left:790.4px;top:621.45px;color:#605e5c;font-size:10.6px;letter-spacing:-0.2px;line-height:12px">0.2M</div>
<div class="a" style="left:773px;top:639.4000000000001px;width:4.399999999999977px;height:15px;background:#8130a4"></div>
<div class="t" style="left:600px;width:165.7px;text-align:right;top:641.6000000000001px;color:#605e5c;font-size:10.4px;line-height:12px">Shorts</div>
<div class="t" style="left:784.9px;top:641.4000000000001px;color:#605e5c;font-size:10.6px;letter-spacing:-0.2px;line-height:12px">0.1M</div>
<div class="a" style="left:773px;top:659.35px;width:4px;height:15px;background:#8130a4"></div>
<div class="t" style="left:600px;width:165.7px;text-align:right;top:661.5500000000001px;color:#605e5c;font-size:10.4px;line-height:12px">Bottles and Cages</div>
<div class="t" style="left:784.5px;top:661.35px;color:#605e5c;font-size:10.6px;letter-spacing:-0.2px;line-height:12px">0.1M</div>
<div class="a" style="left:773px;top:679.3000000000001px;width:3px;height:15px;background:#8130a4"></div>
<div class="t" style="left:600px;width:165.7px;text-align:right;top:681.5000000000001px;color:#605e5c;font-size:10.4px;line-height:12px">Fenders</div>
<div class="t" style="left:783.5px;top:681.3000000000001px;color:#605e5c;font-size:10.6px;letter-spacing:-0.2px;line-height:12px">0.0M</div>
<div class="a" style="left:773px;top:699.25px;width:2.6000000000000227px;height:15px;background:#8130a4"></div>
<div class="t" style="left:600px;width:165.7px;text-align:right;top:701.45px;color:#605e5c;font-size:10.4px;line-height:12px">Hydration Packs</div>
<div class="t" style="left:783.1px;top:701.25px;color:#605e5c;font-size:10.6px;letter-spacing:-0.2px;line-height:12px">0.0M</div>
<div class="t" style="left:658px;top:611px;transform:rotate(-90deg);transform-origin:center;width:74px;height:12px;margin-left:-31px;color:#252423;font-size:12.2px;-webkit-text-stroke:0.2px #252423;line-height:12px;text-align:center">Sub Category</div>
<div class="t" style="left:939px;top:721.8px;color:#252423;font-size:12.3px;-webkit-text-stroke:0.2px #252423;line-height:12px">Total Sales</div>
</body></html>
